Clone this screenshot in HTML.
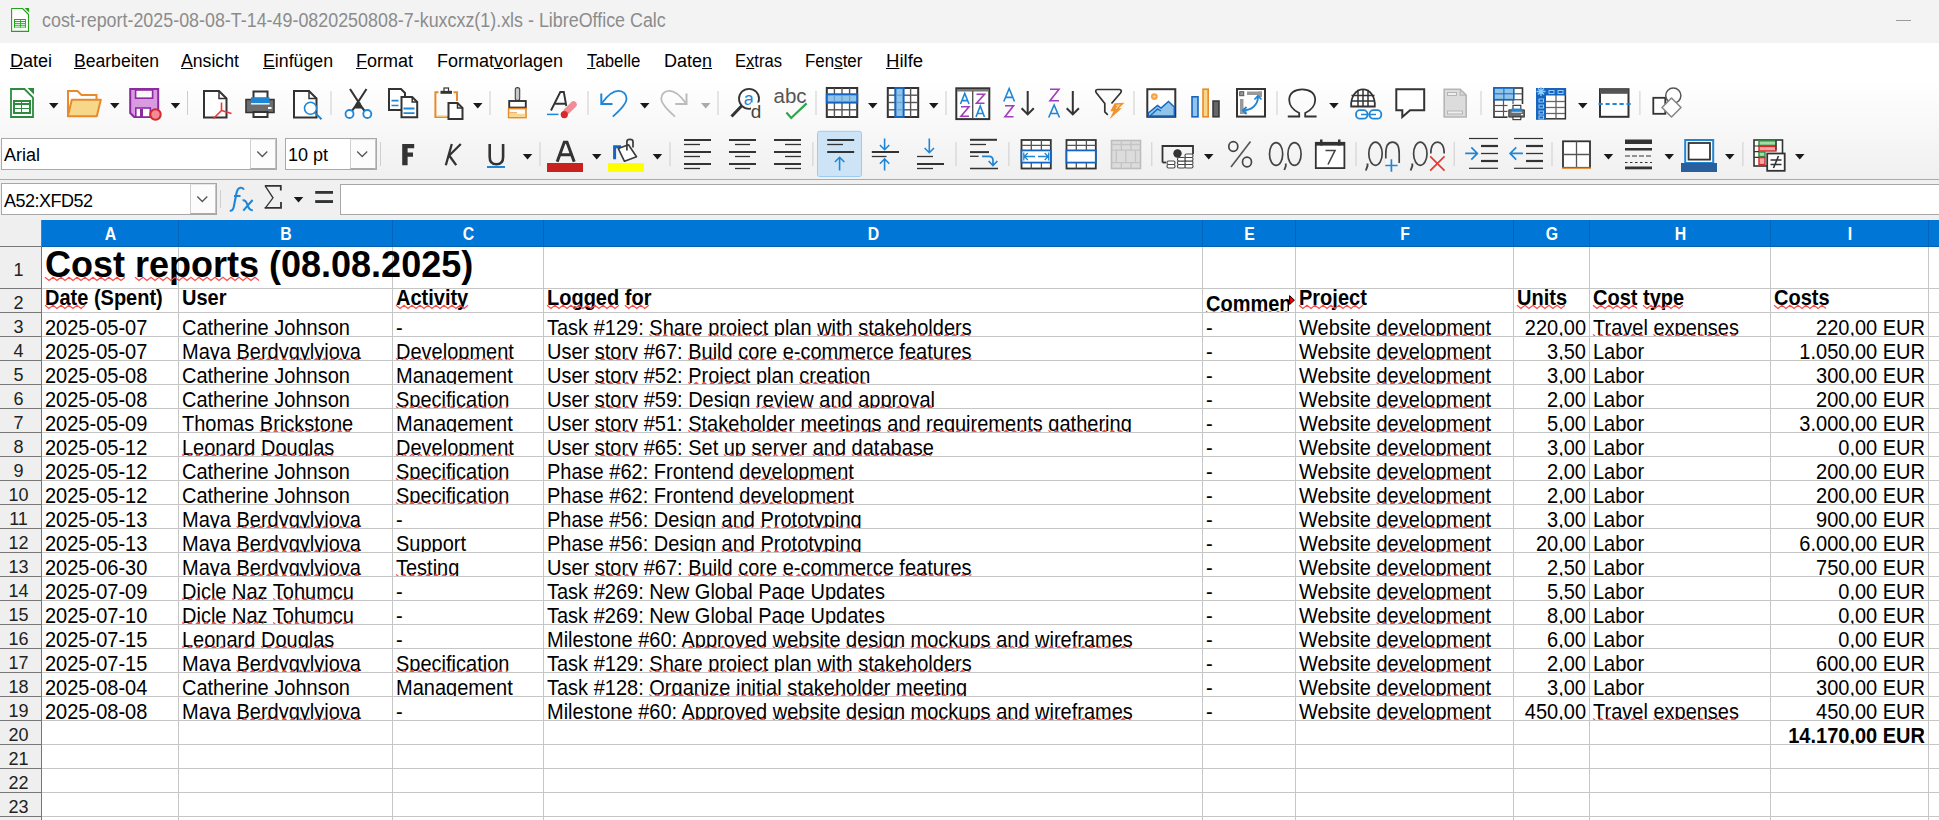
<!DOCTYPE html><html><head><meta charset="utf-8"><style>
*{margin:0;padding:0;box-sizing:border-box}
html,body{width:1939px;height:820px;overflow:hidden;background:#fff}
body{position:relative;font-family:"Liberation Sans",sans-serif}
.a{position:absolute}
.t{position:absolute;white-space:nowrap;line-height:1}
.ui{font-family:"Liberation Sans",sans-serif}
u{text-decoration-thickness:1.3px;text-underline-offset:1px}
.sep{position:absolute;width:1px;background:#cfcfcf}
.dd{position:absolute;width:0;height:0;border-left:5px solid transparent;border-right:5px solid transparent;border-top:6px solid #1a1a1a}

</style></head><body>
<div class="a" style="left:0;top:0;width:1939px;height:43px;background:#f3f3f3"></div>
<div class="t" style="left:42px;top:10px;font-size:20px;color:#8c8c8c;transform:scaleX(0.894);transform-origin:0 0">cost-report-2025-08-08-T-14-49-0820250808-7-kuxcxz(1).xls - LibreOffice Calc</div>
<div class="a" style="left:1896px;top:20px;width:15px;height:1px;background:#9a9a9a"></div>
<div class="t" style="left:10px;top:52px;font-size:18px;color:#000;transform:scaleX(1.0);transform-origin:0 0"><u>D</u>atei</div>
<div class="t" style="left:74px;top:52px;font-size:18px;color:#000;transform:scaleX(0.976);transform-origin:0 0"><u>B</u>earbeiten</div>
<div class="t" style="left:181px;top:52px;font-size:18px;color:#000;transform:scaleX(0.98);transform-origin:0 0"><u>A</u>nsicht</div>
<div class="t" style="left:263px;top:52px;font-size:18px;color:#000;transform:scaleX(0.985);transform-origin:0 0"><u>E</u>infügen</div>
<div class="t" style="left:356px;top:52px;font-size:18px;color:#000;transform:scaleX(1.0);transform-origin:0 0"><u>F</u>ormat</div>
<div class="t" style="left:437px;top:52px;font-size:18px;color:#000;transform:scaleX(1.0);transform-origin:0 0">Format<u>v</u>orlagen</div>
<div class="t" style="left:587px;top:52px;font-size:18px;color:#000;transform:scaleX(0.934);transform-origin:0 0"><u>T</u>abelle</div>
<div class="t" style="left:664px;top:52px;font-size:18px;color:#000;transform:scaleX(1.0);transform-origin:0 0">Date<u>n</u></div>
<div class="t" style="left:735px;top:52px;font-size:18px;color:#000;transform:scaleX(0.92);transform-origin:0 0">E<u>x</u>tras</div>
<div class="t" style="left:805px;top:52px;font-size:18px;color:#000;transform:scaleX(0.94);transform-origin:0 0">Fen<u>s</u>ter</div>
<div class="t" style="left:886px;top:52px;font-size:18px;color:#000;transform:scaleX(1.03);transform-origin:0 0"><u>H</u>ilfe</div>
<div class="a" style="left:0;top:80px;width:1939px;height:99px;background:linear-gradient(#ffffff,#f0f0f0)"></div>
<div class="a" style="left:0;top:179px;width:1939px;height:1px;background:#ababab"></div>
<div class="a" style="left:1px;top:138px;width:276px;height:32px;background:#fff;border:1px solid #a9a9a9"></div>
<div class="a" style="left:250px;top:139px;width:26px;height:30px;background:#fcfcfc;border-left:1px solid #cfcfcf;border-top:1px solid #e6e6e6;border-bottom:1px solid #a9a9a9;border-right:1px solid #c4c4c4"></div>
<div class="t" style="left:4px;top:146px;font-size:18px;color:#000">Arial</div>
<div class="a" style="left:285px;top:138px;width:92px;height:32px;background:#fff;border:1px solid #a9a9a9"></div>
<div class="a" style="left:350px;top:139px;width:26px;height:30px;background:#fcfcfc;border-left:1px solid #cfcfcf;border-top:1px solid #e6e6e6;border-bottom:1px solid #a9a9a9;border-right:1px solid #c4c4c4"></div>
<div class="t" style="left:288px;top:146px;font-size:18px;color:#000">10 pt</div>
<div class="sep" style="left:380px;top:142px;height:24px"></div>
<div class="a" style="left:0;top:180px;width:1939px;height:40px;background:#f0f0f0"></div>
<div class="a" style="left:1px;top:183px;width:216px;height:32px;background:#fff;border:1px solid #a7a7a7"></div>
<div class="a" style="left:190px;top:184px;width:26px;height:30px;background:#fcfcfc;border-left:1px solid #cfcfcf;border-top:1px solid #e6e6e6;border-bottom:1px solid #a9a9a9;border-right:1px solid #c4c4c4"></div>
<div class="t" style="left:4px;top:192px;font-size:18px;letter-spacing:-0.52px;color:#000">A52:XFD52</div>
<div class="sep" style="left:220px;top:190px;height:18px"></div>
<div class="a" style="left:340px;top:184px;width:1600px;height:31px;background:#fff;border:1px solid #a7a7a7"></div>
<svg class="a" style="left:0;top:0" width="1939" height="220" viewBox="0 0 1939 220"><path d="M11 89H24.5L33 97.5V117H11Z" fill="#fff" stroke="#2d8a3e" stroke-width="1.8"/>
<path d="M27.5 88H34V94.5Z" fill="#2d8a3e"/>
<rect x="13" y="100" width="18" height="14" fill="#2d8a3e"/>
<rect x="15" y="102" width="6" height="1" fill="#fff"/><rect x="22" y="102" width="7" height="1" fill="#fff"/>
<rect x="15" y="105" width="6" height="3" fill="#fff"/><rect x="22" y="105" width="7" height="3" fill="#fff"/>
<rect x="15" y="109" width="6" height="3" fill="#fff"/><rect x="22" y="109" width="7" height="3" fill="#fff"/>
<path d="M49 103h9.5l-4.75 5.5z" fill="#1a1a1a"/>
<path d="M68 116V91H77.5L81.5 95H96.5V100" fill="#fff" stroke="#e8892b" stroke-width="2"/>
<path d="M67.8 116.2L71.8 99.8H100.8L96.8 116.2Z" fill="#f7d88a" stroke="#e8892b" stroke-width="2" stroke-linejoin="round"/>
<path d="M110 103h9.5l-4.75 5.5z" fill="#1a1a1a"/>
<path d="M130.2 89H158.2V117H134.2L130.2 113Z" fill="#d89ae0" stroke="#8e2aa0" stroke-width="2"/>
<rect x="135.6" y="90" width="17" height="8.2" fill="#f8f8f8" stroke="#8e2aa0" stroke-width="1.6"/>
<rect x="135.8" y="108" width="14.5" height="9" fill="#fff" stroke="#8e2aa0" stroke-width="1.6"/>
<rect x="140" y="109" width="3" height="8" fill="#8e2aa0"/>
<circle cx="155.5" cy="114.5" r="5.2" fill="#f48a93" stroke="#d42a2a" stroke-width="2"/>
<path d="M170.7 103h9.5l-4.75 5.5z" fill="#1a1a1a"/>
<rect x="187" y="91" width="1" height="24" fill="#cdcdcd"/>
<path d="M204 91H219.0L226.5 98.5V117.5H204Z" fill="#fff" stroke="#333" stroke-width="2" stroke-linejoin="miter"/><path d="M219.0 91V98.5H226.5" fill="none" stroke="#333" stroke-width="1.5"/>
<path d="M221.5 102.5V110.5M221.5 110.5L213.5 118.5M221.5 110.5L231.5 113.5" stroke="#e53935" stroke-width="1.6" fill="none"/>
<g transform="translate(245 90.5) scale(1.0)"><rect x="8.5" y="1" width="14" height="8" fill="#fff" stroke="#333" stroke-width="2"/><path d="M1 9H29V22H1Z" fill="#6d6d6d" stroke="#333" stroke-width="1.6"/><rect x="6" y="6.7" width="18.5" height="5.8" fill="#1f86d6"/><rect x="6" y="12.5" width="18.5" height="1.6" fill="#d6ecfa"/><rect x="8.5" y="21.5" width="14" height="5" fill="#fff" stroke="#333" stroke-width="2"/><rect x="23" y="16.5" width="3.5" height="2" fill="#fff"/></g>
<path d="M294 91H309.0L316.5 98.5V117.5H294Z" fill="#fff" stroke="#333" stroke-width="2" stroke-linejoin="miter"/><path d="M309.0 91V98.5H316.5" fill="none" stroke="#333" stroke-width="1.5"/>
<circle cx="310.5" cy="108.3" r="6" fill="#fff" stroke="#1f86d6" stroke-width="1.6"/><path d="M314.8 112.6L321.5 119.3" stroke="#1f86d6" stroke-width="2"/>
<rect x="330.5" y="91" width="1" height="24" fill="#cdcdcd"/>
<path d="M350 89L362 107.5L364.5 110.8M366.5 89L354.5 107.5L352 110.8" stroke="#333" stroke-width="2.1" fill="none"/><path d="M356.2 102.5H360.3L362.3 108.5H354.2Z" fill="#333"/>
<circle cx="349.5" cy="114" r="4" fill="#fff" stroke="#1f86d6" stroke-width="1.8"/><circle cx="367.3" cy="114" r="4" fill="#fff" stroke="#1f86d6" stroke-width="1.8"/>
<path d="M389 89H401L405 93V110H389Z" fill="#fff" stroke="#333" stroke-width="2"/>
<path d="M391.5 100.6H398.5M391.5 105.5H398.5" stroke="#1f86d6" stroke-width="1.6"/>
<path d="M401.5 97H412.2L417.2 102V117.2H401.5Z" fill="#fff" stroke="#333" stroke-width="2" stroke-linejoin="miter"/><path d="M412.2 97V102H417.2" fill="none" stroke="#333" stroke-width="1.5"/>
<path d="M403.5 108.5H414.5M403.5 113.2H414.5" stroke="#1f86d6" stroke-width="1.8"/>
<path d="M438.5 92.3H435.4V117H448" stroke="#e8892b" stroke-width="2" fill="none"/><path d="M453.5 92.3H457V101" stroke="#e8892b" stroke-width="2" fill="none"/><path d="M436.5 116H447" stroke="#f7d88a" stroke-width="1.5"/>
<rect x="440.5" y="90.8" width="11.5" height="3" fill="#333"/><rect x="444" y="88" width="4.5" height="3.5" fill="#fff" stroke="#333" stroke-width="1.2"/>
<path d="M448.5 103H457.5L462.5 108V119H448.5Z" fill="#fff" stroke="#333" stroke-width="2" stroke-linejoin="miter"/><path d="M457.5 103V108H462.5" fill="none" stroke="#333" stroke-width="1.5"/>
<path d="M473 103h9.5l-4.75 5.5z" fill="#1a1a1a"/>
<rect x="489.5" y="91" width="1" height="24" fill="#cdcdcd"/>
<rect x="515.3" y="87.6" width="4.4" height="13" rx="2" fill="#c8c8c8" stroke="#444" stroke-width="1.1"/>
<rect x="509.2" y="101" width="16.6" height="6.6" fill="#fff" stroke="#333" stroke-width="1.9"/>
<rect x="508.6" y="108.6" width="17.4" height="9" fill="#fff" stroke="#e8892b" stroke-width="1.6"/><rect x="509.4" y="113.8" width="15.8" height="3" fill="#f7d88a"/><path d="M509.5 112.8H517" stroke="#e8892b" stroke-width="1.2" opacity="0.8"/>
<path d="M551 110.5L560.3 92H563.8L566.3 106M555.3 103.8H566" stroke="#333" stroke-width="1.9" fill="none"/>
<path d="M547 114.4H558.5" stroke="#1f86d6" stroke-width="1.5"/>
<path d="M566.5 111.5L573.5 104.5" stroke="#f48a93" stroke-width="6.5" stroke-linecap="round"/><circle cx="564.3" cy="114.6" r="3.6" fill="#d42a2a"/>
<rect x="587.5" y="91" width="1" height="24" fill="#cdcdcd"/>
<path d="M601.3 93.5V104H612.5" stroke="#1f86d6" stroke-width="2" fill="none"/>
<path d="M602 103C607 96 612 90.8 618.5 90.8C623.5 90.8 626.5 94.5 626.5 98.8C626.5 103.5 621 109.5 612.8 116.6" stroke="#1f86d6" stroke-width="1.8" fill="none"/>
<path d="M640 103h9.5l-4.75 5.5z" fill="#1a1a1a"/>
<path d="M686.5 93.5V104H675.3" stroke="#bbb" stroke-width="2" fill="none"/>
<path d="M685.8 103C680.8 96 675.8 90.8 669.3 90.8C664.3 90.8 661.3 94.5 661.3 98.8C661.3 103.5 666.8 109.5 675 116.6" stroke="#bbb" stroke-width="1.8" fill="none"/>
<path d="M701 103h9.5l-4.75 5.5z" fill="#aaa"/>
<rect x="717.5" y="91" width="1" height="24" fill="#cdcdcd"/>
<circle cx="749" cy="98.8" r="10" fill="none" stroke="#333" stroke-width="1.8"/><path d="M742 105.5L731.5 116.5" stroke="#333" stroke-width="3"/>
<text x="743.8" y="104.8" font-family="Liberation Sans" font-size="18" fill="#1f86d6">a</text>
<rect x="751" y="102.5" width="12" height="16" fill="#fbfbfb"/><text x="750.8" y="117.6" font-family="Liberation Sans" font-size="19" fill="#444">d</text>
<text x="773.5" y="102.8" font-family="Liberation Sans" font-size="20.5" fill="#555" textLength="33" lengthAdjust="spacingAndGlyphs">abc</text>
<path d="M786.4 112.5L791.2 118L806.6 103.4" stroke="#2aa84a" stroke-width="2.2" fill="none"/>
<rect x="815.5" y="91" width="1" height="24" fill="#cdcdcd"/>
<rect x="826.8" y="88" width="30.40000000000009" height="29" fill="#fff" stroke="#333" stroke-width="2"/><line x1="834.4" y1="88" x2="834.4" y2="117" stroke="#555" stroke-width="1.4"/><line x1="842.0" y1="88" x2="842.0" y2="117" stroke="#555" stroke-width="1.4"/><line x1="849.6" y1="88" x2="849.6" y2="117" stroke="#555" stroke-width="1.4"/><line x1="826.8" y1="95.2" x2="857.2" y2="95.2" stroke="#555" stroke-width="1.4"/><line x1="826.8" y1="102.5" x2="857.2" y2="102.5" stroke="#555" stroke-width="1.4"/><line x1="826.8" y1="109.8" x2="857.2" y2="109.8" stroke="#555" stroke-width="1.4"/>
<rect x="826.8" y="94.3" width="30.4" height="8.2" fill="#90c4e8" stroke="#1565c0" stroke-width="2"/>
<line x1="834.4" y1="95.3" x2="834.4" y2="101.5" stroke="#5fa3dc" stroke-width="1.2"/>
<line x1="842.0" y1="95.3" x2="842.0" y2="101.5" stroke="#5fa3dc" stroke-width="1.2"/>
<line x1="849.6" y1="95.3" x2="849.6" y2="101.5" stroke="#5fa3dc" stroke-width="1.2"/>
<path d="M868 103h9.5l-4.75 5.5z" fill="#1a1a1a"/>
<rect x="887.8" y="88" width="30.40000000000009" height="29" fill="#fff" stroke="#333" stroke-width="2"/><line x1="895.4" y1="88" x2="895.4" y2="117" stroke="#555" stroke-width="1.4"/><line x1="903.0" y1="88" x2="903.0" y2="117" stroke="#555" stroke-width="1.4"/><line x1="910.6" y1="88" x2="910.6" y2="117" stroke="#555" stroke-width="1.4"/><line x1="887.8" y1="95.2" x2="918.2" y2="95.2" stroke="#555" stroke-width="1.4"/><line x1="887.8" y1="102.5" x2="918.2" y2="102.5" stroke="#555" stroke-width="1.4"/><line x1="887.8" y1="109.8" x2="918.2" y2="109.8" stroke="#555" stroke-width="1.4"/>
<rect x="895.4" y="88" width="8.2" height="29" fill="#90c4e8" stroke="#1565c0" stroke-width="2"/>
<line x1="896.4" y1="95.2" x2="902.6" y2="95.2" stroke="#5fa3dc" stroke-width="1.2"/>
<line x1="896.4" y1="102.5" x2="902.6" y2="102.5" stroke="#5fa3dc" stroke-width="1.2"/>
<line x1="896.4" y1="109.8" x2="902.6" y2="109.8" stroke="#5fa3dc" stroke-width="1.2"/>
<path d="M929 103h9.5l-4.75 5.5z" fill="#1a1a1a"/>
<rect x="945.5" y="91" width="1" height="24" fill="#cdcdcd"/>
<rect x="956.3" y="88.3" width="33" height="30.8" fill="#fff" stroke="#333" stroke-width="2"/><rect x="957" y="89" width="31.5" height="2.5" fill="#777"/><rect x="972" y="91" width="1.4" height="27.5" fill="#555"/>
<path d="M960.5 104L964.75 93.5L969 104M962.37 100.64H967.13" stroke="#1f86d6" stroke-width="1.6" fill="none"/><path d="M961 106.8H969L961 116.2H969" stroke="#a33bbd" stroke-width="1.6" fill="none"/>
<path d="M976.5 94.3H984.5L976.5 103.2H984.5" stroke="#a33bbd" stroke-width="1.6" fill="none"/><path d="M976 117L980.25 106L984.5 117M977.87 113.48H982.63" stroke="#1f86d6" stroke-width="1.6" fill="none"/>
<path d="M1003.8 101.5L1009.15 88.5L1014.5 101.5M1006.154 97.34H1012.146" stroke="#1f86d6" stroke-width="1.6" fill="none"/><path d="M1005 105.8H1013.5L1005 116.7H1013.5" stroke="#a33bbd" stroke-width="1.6" fill="none"/>
<path d="M1027.7 91V114.3M1021.6 108.3L1027.7 114.4L1033.8 108.3" stroke="#333" stroke-width="2" fill="none"/>
<path d="M1050 89.3H1059L1050 100.7H1059" stroke="#a33bbd" stroke-width="1.6" fill="none"/><path d="M1048.7 117.5L1054.1 105L1059.5 117.5M1051.076 113.5H1057.124" stroke="#1f86d6" stroke-width="1.6" fill="none"/>
<path d="M1072.8 91V114.3M1066.7 108.3L1072.8 114.4L1078.9 108.3" stroke="#333" stroke-width="2" fill="none"/>
<path d="M1097.5 89.5H1119.5Q1122.5 90 1120.5 93L1111.5 103.5M1097.5 89.5Q1094.5 90 1096.5 93L1104.8 103.5V111.8L1107.8 114.8" stroke="#333" stroke-width="1.7" fill="none"/>
<path d="M1114.5 103.2L1124.5 102.8L1118.8 108.2L1121.8 108.3L1109.5 119.3L1113.5 111.3L1110.3 111.3Z" fill="#f0922e"/><path d="M1116 105.5L1119 105L1116 109" stroke="#fbd49a" stroke-width="1.2" fill="none"/>
<rect x="1133.5" y="91" width="1" height="24" fill="#cdcdcd"/>
<rect x="1147.3" y="89.2" width="28" height="27.6" fill="#fff" stroke="#333" stroke-width="2"/>
<circle cx="1154.3" cy="96.6" r="3.4" fill="#f5a34a"/><path d="M1152.8 96.6H1155.8M1154.3 95.1V98.1" stroke="#ffd9a8" stroke-width="0.8"/>
<path d="M1148.3 116V113L1157.5 105.5L1161 108L1168.5 101.5L1174.3 107V116Z" fill="#90c4e8" stroke="#1565c0" stroke-width="1.5"/><path d="M1150 116L1157.5 109L1161 111" stroke="#1565c0" stroke-width="1.2" fill="none"/>
<rect x="1192" y="96.8" width="6" height="20" fill="#90c4e8" stroke="#1565c0" stroke-width="1.6"/>
<rect x="1203" y="89.2" width="5.2" height="27.6" fill="#f7d88a" stroke="#e8892b" stroke-width="1.6"/>
<rect x="1213" y="101" width="6" height="15.8" fill="#666" stroke="#333" stroke-width="1.5"/>
<rect x="1237" y="89" width="28" height="27.6" fill="#fff" stroke="#333" stroke-width="2"/>
<rect x="1239.7" y="91.7" width="4" height="4" fill="#999" stroke="#555" stroke-width="1"/><rect x="1247" y="91.5" width="15" height="3.5" fill="#999"/><rect x="1258.5" y="91.5" width="3.5" height="5.5" fill="#999"/><rect x="1240" y="99" width="3.5" height="15" fill="#999"/><rect x="1240" y="110.5" width="6.5" height="3.5" fill="#999"/>
<path d="M1243.5 110.3C1251 110.3 1258 105.5 1258 96.5" stroke="#1f86d6" stroke-width="1.8" fill="none"/><path d="M1254.5 99.5L1258 95.8L1261.5 99.5M1246.5 107L1242.8 110.3L1246.5 114" stroke="#1f86d6" stroke-width="1.8" fill="none"/>
<rect x="1276.5" y="91" width="1" height="24" fill="#cdcdcd"/>
<path d="M1287.8 116.5H1299.2V113C1292.5 110 1289.2 104.5 1289.2 99.8C1289.2 93 1294.8 89.3 1302.2 89.3C1309.6 89.3 1315.2 93 1315.2 99.8C1315.2 104.5 1311.9 110 1305.2 113V116.5H1316.6" stroke="#333" stroke-width="1.8" fill="none"/>
<path d="M1329.2 103h9.5l-4.75 5.5z" fill="#1a1a1a"/>
<path d="M1351.2 106.5C1350.5 96 1356.5 89.3 1363 89.3C1369.5 89.3 1375.5 96 1374.8 106.5Z" fill="#fff" stroke="#333" stroke-width="1.8"/>
<path d="M1351.5 95.5H1374.5M1351 101H1375M1358 89.8V106.5M1368 89.8V106.5M1363 89.5V106.5" stroke="#333" stroke-width="1.5" fill="none"/>
<rect x="1356" y="110.2" width="11.5" height="8.5" rx="4" fill="#fff" stroke="#1f86d6" stroke-width="1.8"/><rect x="1369.5" y="110.2" width="11.8" height="8.5" rx="4" fill="#fff" stroke="#1f86d6" stroke-width="1.8"/><path d="M1361 114.5H1376" stroke="#1f86d6" stroke-width="1.5"/>
<path d="M1396.3 89.2H1424.2V110.2H1410L1402.3 117V110.2H1396.3Z" fill="#fff" stroke="#333" stroke-width="2"/>
<path d="M1444.2 89.2H1460.2L1466.2 95.2V117H1444.2Z" fill="#dcdcdc" stroke="#b5b5b5" stroke-width="1.6" stroke-linejoin="miter"/><path d="M1460.2 89.2V95.2H1466.2" fill="none" stroke="#b5b5b5" stroke-width="1.2000000000000002"/>
<rect x="1447.5" y="92.5" width="9" height="3" fill="#eee" stroke="#b5b5b5" stroke-width="1"/><rect x="1447.5" y="111" width="15" height="3" fill="#eee" stroke="#b5b5b5" stroke-width="1"/>
<rect x="1480.5" y="91" width="1" height="24" fill="#cdcdcd"/>
<rect x="1494" y="88" width="28.5" height="29.200000000000003" fill="#fff" stroke="#333" stroke-width="1.6"/><line x1="1503.5" y1="88" x2="1503.5" y2="117.2" stroke="#555" stroke-width="1.2"/><line x1="1513.0" y1="88" x2="1513.0" y2="117.2" stroke="#555" stroke-width="1.2"/><line x1="1494" y1="93.8" x2="1522.5" y2="93.8" stroke="#555" stroke-width="1.2"/><line x1="1494" y1="99.7" x2="1522.5" y2="99.7" stroke="#555" stroke-width="1.2"/><line x1="1494" y1="105.5" x2="1522.5" y2="105.5" stroke="#555" stroke-width="1.2"/><line x1="1494" y1="111.4" x2="1522.5" y2="111.4" stroke="#555" stroke-width="1.2"/>
<rect x="1494" y="88" width="19.8" height="11.7" fill="#90c4e8" stroke="#1565c0" stroke-width="1.6"/><line x1="1503.9" y1="88.5" x2="1503.9" y2="99" stroke="#1565c0" stroke-width="1"/><line x1="1494.5" y1="93.8" x2="1513.3" y2="93.8" stroke="#1565c0" stroke-width="1"/>
<rect x="1507.5" y="104" width="18" height="17" fill="#fbfbfb"/>
<g transform="translate(1508.2 104.8) scale(0.56)"><rect x="8.5" y="1" width="14" height="8" fill="#fff" stroke="#333" stroke-width="2"/><path d="M1 9H29V22H1Z" fill="#6d6d6d" stroke="#333" stroke-width="1.6"/><rect x="6" y="6.7" width="18.5" height="5.8" fill="#1f86d6"/><rect x="6" y="12.5" width="18.5" height="1.6" fill="#d6ecfa"/><rect x="8.5" y="21.5" width="14" height="5" fill="#fff" stroke="#333" stroke-width="2"/><rect x="23" y="16.5" width="3.5" height="2" fill="#fff"/></g>
<rect x="1536.8" y="88.8" width="28.6" height="30" fill="#fff" stroke="#333" stroke-width="1.5"/>
<line x1="1546" y1="101.5" x2="1565" y2="101.5" stroke="#666" stroke-width="1.3"/>
<line x1="1546" y1="107.5" x2="1565" y2="107.5" stroke="#666" stroke-width="1.3"/>
<line x1="1546" y1="113.5" x2="1565" y2="113.5" stroke="#666" stroke-width="1.3"/>
<line x1="1556" y1="95" x2="1556" y2="118.5" stroke="#666" stroke-width="1.3"/>
<rect x="1536" y="88" width="30" height="7.5" fill="#1565c0"/><rect x="1536" y="88" width="10" height="31.5" fill="#1565c0"/>
<path d="M1541 87V96M1536.5 91.5H1545.5M1538 88.5L1544 94.5M1544 88.5L1538 94.5" stroke="#8fd0ff" stroke-width="1.3"/>
<rect x="1539" y="99" width="4.5" height="3" fill="none" stroke="#a8d4f5" stroke-width="0.9"/>
<rect x="1539" y="105" width="4.5" height="3" fill="none" stroke="#a8d4f5" stroke-width="0.9"/>
<rect x="1539" y="111" width="4.5" height="3" fill="none" stroke="#a8d4f5" stroke-width="0.9"/>
<rect x="1539" y="116" width="4.5" height="3" fill="none" stroke="#a8d4f5" stroke-width="0.9"/>
<rect x="1549" y="90.5" width="5" height="3" fill="none" stroke="#a8d4f5" stroke-width="0.9"/>
<rect x="1558" y="90.5" width="5" height="3" fill="none" stroke="#a8d4f5" stroke-width="0.9"/>
<path d="M1578 103h9.5l-4.75 5.5z" fill="#1a1a1a"/>
<rect x="1600" y="89.2" width="28.5" height="27.6" fill="#fff" stroke="#333" stroke-width="2"/><rect x="1600" y="89.2" width="28.5" height="4.6" fill="#555"/>
<path d="M1598.5 104H1631" stroke="#1f86d6" stroke-width="2" stroke-dasharray="4.2 2.8"/>
<rect x="1639.4" y="91" width="1" height="24" fill="#cdcdcd"/>
<rect x="1653.3" y="97.8" width="12" height="16" fill="#fff" stroke="#333" stroke-width="1.8"/>
<circle cx="1673.3" cy="95.6" r="7.6" fill="#fff" stroke="#555" stroke-width="1.5"/>
<path d="M1671.5 98L1681 107.5L1671.5 117L1662 107.5Z" fill="#fff" stroke="#888" stroke-width="1.6" stroke-linejoin="round"/>
<path d="M402.2 144H414.2V148.2H407.6V152.6H413V156.8H407.6V165.2H402.2Z" fill="#333"/>
<path d="M451.8 144L445.8 165.2M460.8 144L449.2 155.5L456.2 165.2" stroke="#333" stroke-width="2.3" fill="none"/>
<path d="M489.7 144V157C489.7 162 492.3 164.3 496.4 164.3C500.5 164.3 503.1 162 503.1 157V144" stroke="#333" stroke-width="2.6" fill="none"/><rect x="487" y="166" width="18" height="2" fill="#1f86d6"/>
<path d="M522.8 154h9.5l-4.75 5.5z" fill="#1a1a1a"/>
<rect x="539.5" y="142" width="1" height="24" fill="#cdcdcd"/>
<path d="M557.2 161.7L564.3 142.2H567L574.2 161.7M559.8 154.8H571.6" stroke="#333" stroke-width="3" fill="none"/><rect x="547" y="163" width="36" height="9" fill="#c9211e"/>
<path d="M592 154h9.5l-4.75 5.5z" fill="#1a1a1a"/>
<path d="M614.6 159.3V146.8H621" stroke="#1565c0" stroke-width="3" fill="none"/>
<path d="M618.3 148.6L628.5 144.8L636.5 156.8L624.5 161.3Z" fill="#fff" stroke="#3a3a3a" stroke-width="1.6" stroke-linejoin="round"/><path d="M626.9 150.5V141.7Q626.9 139.4 629.9 139.4Q633 139.4 633 141.7V147.5" stroke="#3a3a3a" stroke-width="1.7" fill="none"/>
<rect x="608" y="163" width="36" height="9" fill="#ffff00"/>
<path d="M652.7 154h9.5l-4.75 5.5z" fill="#1a1a1a"/>
<rect x="669.5" y="142" width="1" height="24" fill="#cdcdcd"/>
<rect x="684" y="139.0" width="27" height="2" fill="#333"/><rect x="684" y="143.85" width="16" height="1.3" fill="#333"/><rect x="684" y="151.0" width="27" height="2" fill="#333"/><rect x="684" y="155.85" width="16" height="1.3" fill="#333"/><rect x="684" y="163.0" width="27" height="2" fill="#333"/><rect x="684" y="167.85" width="16" height="1.3" fill="#333"/>
<rect x="729" y="139.0" width="27" height="2" fill="#333"/><rect x="735" y="143.85" width="15" height="1.3" fill="#333"/><rect x="729" y="151.0" width="27" height="2" fill="#333"/><rect x="735" y="155.85" width="15" height="1.3" fill="#333"/><rect x="729" y="163.0" width="27" height="2" fill="#333"/><rect x="735" y="167.85" width="15" height="1.3" fill="#333"/>
<rect x="774" y="139.0" width="27" height="2" fill="#333"/><rect x="785" y="143.85" width="16" height="1.3" fill="#333"/><rect x="774" y="151.0" width="27" height="2" fill="#333"/><rect x="785" y="155.85" width="16" height="1.3" fill="#333"/><rect x="774" y="163.0" width="27" height="2" fill="#333"/><rect x="785" y="167.85" width="16" height="1.3" fill="#333"/>
<rect x="812.4" y="142" width="1" height="24" fill="#cdcdcd"/>
<rect x="817.5" y="131.3" width="44" height="45.2" rx="2" fill="#cde4f7" stroke="#9dcbf0" stroke-width="1"/>
<rect x="827.2" y="139.0" width="27.0" height="2" fill="#333"/><rect x="827.2" y="143.85" width="15.799999999999955" height="1.3" fill="#333"/><rect x="827.2" y="151.0" width="27.0" height="2" fill="#333"/>
<path d="M839.6 170.5V157.5M834.9 162L839.6 157.3L844.3 162" stroke="#1f86d6" stroke-width="1.6" fill="none"/>
<rect x="871.8" y="151.0" width="27.200000000000045" height="2" fill="#333"/><rect x="871.8" y="155.85" width="14.700000000000045" height="1.3" fill="#333"/>
<path d="M884.6 138.5V149.5M879.9 145L884.6 149.7L889.3 145M884.6 170.5V159.2M879.9 163.7L884.6 159L889.3 163.7" stroke="#1f86d6" stroke-width="1.6" fill="none"/>
<rect x="917" y="155.85" width="16" height="1.3" fill="#333"/><rect x="917" y="163.0" width="27" height="2" fill="#333"/><rect x="917" y="167.85" width="16" height="1.3" fill="#333"/>
<path d="M929.3 138.5V152.5M924.6 148L929.3 152.7L934 148" stroke="#1f86d6" stroke-width="1.6" fill="none"/>
<rect x="955.5" y="142" width="1" height="24" fill="#cdcdcd"/>
<rect x="970" y="138.8" width="27" height="2" fill="#333"/><rect x="970" y="143.85" width="16" height="1.3" fill="#333"/><rect x="970" y="151.1" width="19" height="2" fill="#333"/><rect x="970" y="155.65" width="8.600000000000023" height="1.3" fill="#333"/><rect x="970" y="167.75" width="28" height="1.5" fill="#333"/>
<path d="M982 156.3H989Q993 156.3 993 160.5V165M988.6 161L993 165.5L997.4 161" stroke="#1f86d6" stroke-width="1.7" fill="none"/>
<rect x="1008.4" y="142" width="1" height="24" fill="#cdcdcd"/>
<rect x="1021.5" y="140" width="29.3" height="28.5" fill="#fff" stroke="#333" stroke-width="1.8"/>
<path d="M1021.5 145.3H1050.8M1031.3 140V150.3M1041.4 140V150.3M1031.3 162.5V168.5M1041.4 162.5V168.5" stroke="#555" stroke-width="1.3"/>
<rect x="1021.5" y="150.4" width="29.3" height="12.2" fill="#fff" stroke="#1565c0" stroke-width="1.8"/>
<rect x="1066.5" y="140" width="29.3" height="28.5" fill="#fff" stroke="#333" stroke-width="1.8"/>
<path d="M1066.5 145.3H1095.8M1076.3 140V150.3M1086.4 140V150.3M1076.3 162.5V168.5M1086.4 162.5V168.5" stroke="#555" stroke-width="1.3"/>
<rect x="1066.5" y="150.4" width="29.3" height="12.2" fill="#fff" stroke="#1565c0" stroke-width="1.8"/>
<path d="M1024.5 156.5H1035M1038 156.5H1048M1027.8 153L1024.3 156.5L1027.8 160M1044.7 153L1048.2 156.5L1044.7 160M1023.8 152.5V160.5M1048.7 152.5V160.5" stroke="#1f86d6" stroke-width="1.3" fill="none"/>
<rect x="1111.5" y="140.5" width="29" height="28" fill="#dcdcdc" stroke="#bdbdbd" stroke-width="1.6"/>
<path d="M1111.5 144.5H1140.5M1111.5 150.2H1140.5M1111.5 162.6H1140.5M1121.3 140.5V150.2M1131 140.5V150.2M1121.3 162.6V168.5M1131 162.6V168.5M1116.3 150.2V162.6M1125.8 150.2V162.6M1135.5 150.2V162.6" stroke="#c4c4c4" stroke-width="1.3"/>
<rect x="1151.3" y="142" width="1" height="24" fill="#cdcdcd"/>
<path d="M1162.5 162.5V146H1193V154" stroke="#333" stroke-width="1.8" fill="none"/><path d="M1162.5 162.5H1166" stroke="#333" stroke-width="1.8"/>
<circle cx="1177.5" cy="153.5" r="4.2" fill="#333"/>
<rect x="1167" y="164.5" width="8" height="3.5" rx="1.5" fill="#fff" stroke="#444" stroke-width="1.1"/>
<rect x="1167" y="161.0" width="8" height="3.5" rx="1.5" fill="#fff" stroke="#444" stroke-width="1.1"/>
<rect x="1177.5" y="164.5" width="8" height="3.5" rx="1.5" fill="#fff" stroke="#444" stroke-width="1.1"/>
<rect x="1177.5" y="161.0" width="8" height="3.5" rx="1.5" fill="#fff" stroke="#444" stroke-width="1.1"/>
<rect x="1177.5" y="157.5" width="8" height="3.5" rx="1.5" fill="#fff" stroke="#444" stroke-width="1.1"/>
<rect x="1185" y="164.5" width="8" height="3.5" rx="1.5" fill="#fff" stroke="#444" stroke-width="1.1"/>
<rect x="1185" y="161.0" width="8" height="3.5" rx="1.5" fill="#fff" stroke="#444" stroke-width="1.1"/>
<rect x="1185" y="157.5" width="8" height="3.5" rx="1.5" fill="#fff" stroke="#444" stroke-width="1.1"/>
<rect x="1185" y="154.0" width="8" height="3.5" rx="1.5" fill="#fff" stroke="#444" stroke-width="1.1"/>
<path d="M1204 154h9.5l-4.75 5.5z" fill="#1a1a1a"/>
<ellipse cx="1233.3" cy="146.5" rx="4.5" ry="4.9" fill="none" stroke="#444" stroke-width="1.7"/><ellipse cx="1247" cy="162" rx="4.5" ry="4.9" fill="none" stroke="#444" stroke-width="1.7"/><path d="M1250.5 141.5L1231 167" stroke="#555" stroke-width="1.6"/>
<ellipse cx="1276.1" cy="154" rx="6.6" ry="11.4" fill="none" stroke="#444" stroke-width="1.7"/><ellipse cx="1294.5" cy="154" rx="6.6" ry="11.4" fill="none" stroke="#444" stroke-width="1.7"/><path d="M1285.8 163.5V166L1284.3 170" stroke="#444" stroke-width="1.8" fill="none"/>
<rect x="1315.8" y="142.8" width="28.6" height="25.3" fill="#fff" stroke="#333" stroke-width="1.8"/><rect x="1315.8" y="142.3" width="28.6" height="3.3" fill="#333"/><rect x="1320" y="139.5" width="2.5" height="6" fill="#333"/><rect x="1338" y="139.5" width="2.5" height="6" fill="#333"/>
<path d="M1325.5 150.5H1335L1328 164.5" stroke="#444" stroke-width="1.6" fill="none"/>
<rect x="1355.5" y="142" width="1" height="24" fill="#cdcdcd"/>
<path d="M1367.5 163.5V166L1365.8 170.5" stroke="#444" stroke-width="1.9" fill="none"/><ellipse cx="1375.5" cy="153.7" rx="6.7" ry="11.6" fill="none" stroke="#444" stroke-width="1.7"/><path d="M1385.8 163V153.7C1385.8 145.5 1389 142.1 1392.5 142.1C1396 142.1 1399.2 145.5 1399.2 153.7V163" stroke="#444" stroke-width="1.7" fill="none"/>
<rect x="1385" y="158.5" width="12.5" height="8.5" fill="#f6f6f6"/><path d="M1391.4 159.3V171.7M1385.3 165.5H1397.6" stroke="#1f86d6" stroke-width="1.7"/>
<path d="M1412.3 163.5V166L1410.6 170.5" stroke="#444" stroke-width="1.9" fill="none"/><ellipse cx="1420.3" cy="153.7" rx="6.7" ry="11.6" fill="none" stroke="#444" stroke-width="1.7"/><path d="M1430.8 153.6C1430.8 145.5 1434 142.1 1437.5 142.1C1441 142.1 1444.2 145.5 1444.2 153.6" stroke="#444" stroke-width="1.7" fill="none"/>
<path d="M1430.2 156.3L1444.5 170.6M1444.5 156.3L1430.2 170.6" stroke="#e53935" stroke-width="1.7"/>
<rect x="1453.7" y="142" width="1" height="24" fill="#cdcdcd"/>
<rect x="1469" y="137.9" width="29" height="1.2" fill="#333"/><rect x="1481" y="144.9" width="17" height="2.2" fill="#333"/><rect x="1481" y="152.85" width="17" height="1.3" fill="#333"/><rect x="1481" y="159.9" width="17" height="2.2" fill="#333"/><rect x="1469" y="167.70000000000002" width="29" height="1.2" fill="#333"/>
<path d="M1465.2 153.4H1477M1471.3 147.3L1477.4 153.4L1471.3 159.6" stroke="#1f86d6" stroke-width="1.7" fill="none"/>
<rect x="1514" y="137.9" width="29" height="1.2" fill="#333"/><rect x="1526" y="144.9" width="17" height="2.2" fill="#333"/><rect x="1526" y="152.85" width="17" height="1.3" fill="#333"/><rect x="1526" y="159.9" width="17" height="2.2" fill="#333"/><rect x="1514" y="167.70000000000002" width="29" height="1.2" fill="#333"/>
<path d="M1522.9 153.4H1510.8M1516.2 147.3L1510.1 153.4L1516.2 159.6" stroke="#1f86d6" stroke-width="1.7" fill="none"/>
<rect x="1551.5" y="142" width="1" height="24" fill="#cdcdcd"/>
<rect x="1563" y="141.3" width="27" height="26.5" fill="#fff" stroke="#333" stroke-width="1.8"/><path d="M1576.5 141.3V167.8M1563 154.5H1590" stroke="#555" stroke-width="1.3"/><rect x="1562" y="167.5" width="29" height="1.4" fill="#f29a38"/>
<path d="M1603.7 154h9.5l-4.75 5.5z" fill="#1a1a1a"/>
<rect x="1625" y="139.5" width="27" height="4.5" fill="#333"/><rect x="1625" y="148" width="27" height="2.5" fill="#333"/>
<path d="M1625 156H1652" stroke="#333" stroke-width="1.2" stroke-dasharray="5 2"/><path d="M1625 162.5H1652" stroke="#333" stroke-width="1.2" stroke-dasharray="2.5 2.5"/><rect x="1625" y="166.5" width="27" height="2.8" fill="#333"/>
<path d="M1664.5 154h9.5l-4.75 5.5z" fill="#1a1a1a"/>
<rect x="1685.2" y="140" width="28" height="23" fill="#fff" stroke="#1f86d6" stroke-width="2"/><rect x="1688.6" y="143" width="21.4" height="16.6" fill="#fff" stroke="#333" stroke-width="1.8"/><rect x="1681" y="163" width="36" height="9" fill="#2a5f9e"/>
<path d="M1725 154h9.5l-4.75 5.5z" fill="#1a1a1a"/>
<rect x="1742.4" y="142" width="1" height="24" fill="#cdcdcd"/>
<rect x="1754" y="140" width="28.5" height="26" fill="#fff" stroke="#333" stroke-width="1.6"/>
<rect x="1759" y="140.8" width="17" height="4.6" fill="#a6dba8" stroke="#2d8a3e" stroke-width="1.4"/><rect x="1759" y="146.4" width="17" height="4.6" fill="#f6a5a5" stroke="#d42a2a" stroke-width="1.4"/><rect x="1759" y="152" width="6" height="4.6" fill="#a6dba8" stroke="#2d8a3e" stroke-width="1.4"/><rect x="1759" y="157.6" width="6" height="7" fill="#f6a5a5" stroke="#d42a2a" stroke-width="1.4"/>
<path d="M1754 146H1759M1754 151.7H1759M1754 157.3H1759M1776 140V150" stroke="#333" stroke-width="1.2"/>
<rect x="1767.2" y="153.5" width="17.5" height="17.3" fill="#fff" stroke="#333" stroke-width="1.8"/><path d="M1770.5 160H1781.5M1770.5 164.5H1781.5M1778.5 156L1773.5 168" stroke="#333" stroke-width="1.6"/>
<path d="M1795 154h9.5l-4.75 5.5z" fill="#1a1a1a"/>
<path d="M243.8 189.8Q243 187.3 240.3 187.8Q237.3 188.3 236.3 194L233.8 206.8Q232.8 211.3 229.8 210.6M234 196H240.5" stroke="#1f86d6" stroke-width="2.1" fill="none"/>
<path d="M242.6 200.5Q245.5 199.3 247.5 205Q249.2 210.5 252.8 210.2M252.6 200L243.3 210.6" stroke="#1f86d6" stroke-width="2.1" fill="none"/>
<path d="M264.8 185.8H280.8V190.4" stroke="#333" stroke-width="1.8" fill="none"/><path d="M265.3 186.2L273 197.8L265.3 208.2" stroke="#333" stroke-width="1.3" fill="none"/><path d="M264.6 207.8H281V202" stroke="#333" stroke-width="1.8" fill="none"/>
<path d="M293.8 197h9.5l-4.75 5.5z" fill="#1a1a1a"/>
<rect x="315.2" y="191" width="17.8" height="2.8" fill="#333"/><rect x="315.2" y="200.1" width="17.8" height="2.9" fill="#333"/><path d="M257.3 151.5L262.3 156.5L267.3 151.5" stroke="#555" stroke-width="1.3" fill="none"/><path d="M357.2 151.5L362.2 156.5L367.2 151.5" stroke="#555" stroke-width="1.3" fill="none"/><path d="M197.3 196.5L202.3 201.5L207.3 196.5" stroke="#555" stroke-width="1.3" fill="none"/></svg>
<div class="a" style="left:0;top:220px;width:41px;height:27px;background:#efefef"></div>
<div class="a" style="left:0;top:246px;width:41px;height:574px;background:#efefef"></div>
<div class="a" style="left:42px;top:220px;width:1897px;height:26px;background:#0076d6"></div>
<div class="a" style="left:41px;top:246px;width:1898px;height:1px;background:#0062b4"></div>
<div class="a" style="left:0;top:246px;width:41px;height:1px;background:#777"></div>
<div class="a" style="left:41px;top:220px;width:1px;height:600px;background:#777"></div>
<div class="a" style="left:178px;top:220px;width:1px;height:26px;background:#0064b8"></div>
<div class="t" style="left:42.2px;width:137px;text-align:center;top:225px;font-size:18px;font-weight:bold;color:#fff;transform:scaleX(0.88)">A</div>
<div class="a" style="left:392px;top:220px;width:1px;height:26px;background:#0064b8"></div>
<div class="t" style="left:179.2px;width:214px;text-align:center;top:225px;font-size:18px;font-weight:bold;color:#fff;transform:scaleX(0.88)">B</div>
<div class="a" style="left:543px;top:220px;width:1px;height:26px;background:#0064b8"></div>
<div class="t" style="left:393.2px;width:151px;text-align:center;top:225px;font-size:18px;font-weight:bold;color:#fff;transform:scaleX(0.88)">C</div>
<div class="a" style="left:1202px;top:220px;width:1px;height:26px;background:#0064b8"></div>
<div class="t" style="left:544.2px;width:659px;text-align:center;top:225px;font-size:18px;font-weight:bold;color:#fff;transform:scaleX(0.88)">D</div>
<div class="a" style="left:1295px;top:220px;width:1px;height:26px;background:#0064b8"></div>
<div class="t" style="left:1203.2px;width:93px;text-align:center;top:225px;font-size:18px;font-weight:bold;color:#fff;transform:scaleX(0.88)">E</div>
<div class="a" style="left:1513px;top:220px;width:1px;height:26px;background:#0064b8"></div>
<div class="t" style="left:1296.2px;width:218px;text-align:center;top:225px;font-size:18px;font-weight:bold;color:#fff;transform:scaleX(0.88)">F</div>
<div class="a" style="left:1589px;top:220px;width:1px;height:26px;background:#0064b8"></div>
<div class="t" style="left:1514.2px;width:76px;text-align:center;top:225px;font-size:18px;font-weight:bold;color:#fff;transform:scaleX(0.88)">G</div>
<div class="a" style="left:1770px;top:220px;width:1px;height:26px;background:#0064b8"></div>
<div class="t" style="left:1590.2px;width:181px;text-align:center;top:225px;font-size:18px;font-weight:bold;color:#fff;transform:scaleX(0.88)">H</div>
<div class="a" style="left:1928px;top:220px;width:1px;height:26px;background:#0064b8"></div>
<div class="t" style="left:1771.2px;width:158px;text-align:center;top:225px;font-size:18px;font-weight:bold;color:#fff;transform:scaleX(0.88)">I</div>
<div class="a" style="left:178px;top:247px;width:1px;height:573px;background:#c6c6c6"></div>
<div class="a" style="left:392px;top:247px;width:1px;height:573px;background:#c6c6c6"></div>
<div class="a" style="left:543px;top:247px;width:1px;height:573px;background:#c6c6c6"></div>
<div class="a" style="left:1202px;top:247px;width:1px;height:573px;background:#c6c6c6"></div>
<div class="a" style="left:1295px;top:247px;width:1px;height:573px;background:#c6c6c6"></div>
<div class="a" style="left:1513px;top:247px;width:1px;height:573px;background:#c6c6c6"></div>
<div class="a" style="left:1589px;top:247px;width:1px;height:573px;background:#c6c6c6"></div>
<div class="a" style="left:1770px;top:247px;width:1px;height:573px;background:#c6c6c6"></div>
<div class="a" style="left:1928px;top:247px;width:1px;height:573px;background:#c6c6c6"></div>
<div class="a" style="left:42px;top:288px;width:1897px;height:1px;background:#c6c6c6"></div>
<div class="a" style="left:0;top:288px;width:41px;height:1px;background:#777"></div>
<div class="a" style="left:42px;top:312px;width:1897px;height:1px;background:#c6c6c6"></div>
<div class="a" style="left:0;top:312px;width:41px;height:1px;background:#777"></div>
<div class="a" style="left:42px;top:336px;width:1897px;height:1px;background:#c6c6c6"></div>
<div class="a" style="left:0;top:336px;width:41px;height:1px;background:#777"></div>
<div class="a" style="left:42px;top:360px;width:1897px;height:1px;background:#c6c6c6"></div>
<div class="a" style="left:0;top:360px;width:41px;height:1px;background:#777"></div>
<div class="a" style="left:42px;top:384px;width:1897px;height:1px;background:#c6c6c6"></div>
<div class="a" style="left:0;top:384px;width:41px;height:1px;background:#777"></div>
<div class="a" style="left:42px;top:408px;width:1897px;height:1px;background:#c6c6c6"></div>
<div class="a" style="left:0;top:408px;width:41px;height:1px;background:#777"></div>
<div class="a" style="left:42px;top:432px;width:1897px;height:1px;background:#c6c6c6"></div>
<div class="a" style="left:0;top:432px;width:41px;height:1px;background:#777"></div>
<div class="a" style="left:42px;top:456px;width:1897px;height:1px;background:#c6c6c6"></div>
<div class="a" style="left:0;top:456px;width:41px;height:1px;background:#777"></div>
<div class="a" style="left:42px;top:480px;width:1897px;height:1px;background:#c6c6c6"></div>
<div class="a" style="left:0;top:480px;width:41px;height:1px;background:#777"></div>
<div class="a" style="left:42px;top:504px;width:1897px;height:1px;background:#c6c6c6"></div>
<div class="a" style="left:0;top:504px;width:41px;height:1px;background:#777"></div>
<div class="a" style="left:42px;top:528px;width:1897px;height:1px;background:#c6c6c6"></div>
<div class="a" style="left:0;top:528px;width:41px;height:1px;background:#777"></div>
<div class="a" style="left:42px;top:552px;width:1897px;height:1px;background:#c6c6c6"></div>
<div class="a" style="left:0;top:552px;width:41px;height:1px;background:#777"></div>
<div class="a" style="left:42px;top:576px;width:1897px;height:1px;background:#c6c6c6"></div>
<div class="a" style="left:0;top:576px;width:41px;height:1px;background:#777"></div>
<div class="a" style="left:42px;top:600px;width:1897px;height:1px;background:#c6c6c6"></div>
<div class="a" style="left:0;top:600px;width:41px;height:1px;background:#777"></div>
<div class="a" style="left:42px;top:624px;width:1897px;height:1px;background:#c6c6c6"></div>
<div class="a" style="left:0;top:624px;width:41px;height:1px;background:#777"></div>
<div class="a" style="left:42px;top:648px;width:1897px;height:1px;background:#c6c6c6"></div>
<div class="a" style="left:0;top:648px;width:41px;height:1px;background:#777"></div>
<div class="a" style="left:42px;top:672px;width:1897px;height:1px;background:#c6c6c6"></div>
<div class="a" style="left:0;top:672px;width:41px;height:1px;background:#777"></div>
<div class="a" style="left:42px;top:696px;width:1897px;height:1px;background:#c6c6c6"></div>
<div class="a" style="left:0;top:696px;width:41px;height:1px;background:#777"></div>
<div class="a" style="left:42px;top:720px;width:1897px;height:1px;background:#c6c6c6"></div>
<div class="a" style="left:0;top:720px;width:41px;height:1px;background:#777"></div>
<div class="a" style="left:42px;top:744px;width:1897px;height:1px;background:#c6c6c6"></div>
<div class="a" style="left:0;top:744px;width:41px;height:1px;background:#777"></div>
<div class="a" style="left:42px;top:768px;width:1897px;height:1px;background:#c6c6c6"></div>
<div class="a" style="left:0;top:768px;width:41px;height:1px;background:#777"></div>
<div class="a" style="left:42px;top:792px;width:1897px;height:1px;background:#c6c6c6"></div>
<div class="a" style="left:0;top:792px;width:41px;height:1px;background:#777"></div>
<div class="a" style="left:42px;top:816px;width:1897px;height:1px;background:#c6c6c6"></div>
<div class="a" style="left:0;top:816px;width:41px;height:1px;background:#777"></div>
<div class="t" style="left:-2px;width:41px;text-align:center;top:261.0px;font-size:18px;color:#222">1</div>
<div class="t" style="left:-2px;width:41px;text-align:center;top:294.0px;font-size:18px;color:#222">2</div>
<div class="t" style="left:-2px;width:41px;text-align:center;top:318.0px;font-size:18px;color:#222">3</div>
<div class="t" style="left:-2px;width:41px;text-align:center;top:342.0px;font-size:18px;color:#222">4</div>
<div class="t" style="left:-2px;width:41px;text-align:center;top:366.0px;font-size:18px;color:#222">5</div>
<div class="t" style="left:-2px;width:41px;text-align:center;top:390.0px;font-size:18px;color:#222">6</div>
<div class="t" style="left:-2px;width:41px;text-align:center;top:414.0px;font-size:18px;color:#222">7</div>
<div class="t" style="left:-2px;width:41px;text-align:center;top:438.0px;font-size:18px;color:#222">8</div>
<div class="t" style="left:-2px;width:41px;text-align:center;top:462.0px;font-size:18px;color:#222">9</div>
<div class="t" style="left:-2px;width:41px;text-align:center;top:486.0px;font-size:18px;color:#222">10</div>
<div class="t" style="left:-2px;width:41px;text-align:center;top:510.0px;font-size:18px;color:#222">11</div>
<div class="t" style="left:-2px;width:41px;text-align:center;top:534.0px;font-size:18px;color:#222">12</div>
<div class="t" style="left:-2px;width:41px;text-align:center;top:558.0px;font-size:18px;color:#222">13</div>
<div class="t" style="left:-2px;width:41px;text-align:center;top:582.0px;font-size:18px;color:#222">14</div>
<div class="t" style="left:-2px;width:41px;text-align:center;top:606.0px;font-size:18px;color:#222">15</div>
<div class="t" style="left:-2px;width:41px;text-align:center;top:630.0px;font-size:18px;color:#222">16</div>
<div class="t" style="left:-2px;width:41px;text-align:center;top:654.0px;font-size:18px;color:#222">17</div>
<div class="t" style="left:-2px;width:41px;text-align:center;top:678.0px;font-size:18px;color:#222">18</div>
<div class="t" style="left:-2px;width:41px;text-align:center;top:702.0px;font-size:18px;color:#222">19</div>
<div class="t" style="left:-2px;width:41px;text-align:center;top:726.0px;font-size:18px;color:#222">20</div>
<div class="t" style="left:-2px;width:41px;text-align:center;top:750.0px;font-size:18px;color:#222">21</div>
<div class="t" style="left:-2px;width:41px;text-align:center;top:774.0px;font-size:18px;color:#222">22</div>
<div class="t" style="left:-2px;width:41px;text-align:center;top:798.0px;font-size:18px;color:#222">23</div>
<div class="t" style="left:-2px;width:41px;text-align:center;top:822.0px;font-size:18px;color:#222">24</div>
<div class="a" style="left:42px;top:247px;width:136px;height:41px;"><div class="t" style="left:3px;top:-0.47px;font-size:36px;font-weight:bold;color:#000;transform:scaleY(1);transform-origin:0 30.47px">Cost reports (08.08.2025)</div></div>
<div class="a" style="left:42px;top:289px;width:136px;height:23px;overflow:hidden;"><div class="t" style="left:3px;top:-0.93px;font-size:20px;font-weight:bold;color:#000;transform:scaleY(1.075);transform-origin:0 16.93px">Date (Spent)</div></div>
<div class="a" style="left:179px;top:289px;width:213px;height:23px;overflow:hidden;"><div class="t" style="left:3px;top:-0.93px;font-size:20px;font-weight:bold;color:#000;transform:scaleY(1.075);transform-origin:0 16.93px">User</div></div>
<div class="a" style="left:393px;top:289px;width:150px;height:23px;overflow:hidden;"><div class="t" style="left:3px;top:-0.93px;font-size:20px;font-weight:bold;color:#000;transform:scaleY(1.075);transform-origin:0 16.93px">Activity</div></div>
<div class="a" style="left:544px;top:289px;width:658px;height:23px;overflow:hidden;"><div class="t" style="left:3px;top:-0.93px;font-size:20px;font-weight:bold;color:#000;transform:scaleY(1.075);transform-origin:0 16.93px">Logged for</div></div>
<div class="a" style="left:1203px;top:289px;width:86px;height:23px;overflow:hidden;"><div class="t" style="left:3px;top:5.07px;font-size:20px;font-weight:bold;color:#000;transform:scaleY(1.075);transform-origin:0 16.93px">Commen</div></div>
<div class="a" style="left:1296px;top:289px;width:217px;height:23px;overflow:hidden;"><div class="t" style="left:3px;top:-0.93px;font-size:20px;font-weight:bold;color:#000;transform:scaleY(1.075);transform-origin:0 16.93px">Project</div></div>
<div class="a" style="left:1514px;top:289px;width:75px;height:23px;overflow:hidden;"><div class="t" style="left:3px;top:-0.93px;font-size:20px;font-weight:bold;color:#000;transform:scaleY(1.075);transform-origin:0 16.93px">Units</div></div>
<div class="a" style="left:1590px;top:289px;width:180px;height:23px;overflow:hidden;"><div class="t" style="left:3px;top:-0.93px;font-size:20px;font-weight:bold;color:#000;transform:scaleY(1.075);transform-origin:0 16.93px">Cost type</div></div>
<div class="a" style="left:1771px;top:289px;width:157px;height:23px;overflow:hidden;"><div class="t" style="left:3px;top:-0.93px;font-size:20px;font-weight:bold;color:#000;transform:scaleY(1.075);transform-origin:0 16.93px">Costs</div></div>
<div class="a" style="left:42px;top:313px;width:136px;height:23px;overflow:hidden;"><div class="t" style="left:3px;top:5.07px;font-size:20px;color:#000;transform:scaleY(1.075);transform-origin:0 16.93px">2025-05-07</div></div>
<div class="a" style="left:179px;top:313px;width:213px;height:23px;overflow:hidden;"><div class="t" style="left:3px;top:5.07px;font-size:20px;color:#000;transform:scaleY(1.075);transform-origin:0 16.93px">Catherine Johnson</div></div>
<div class="a" style="left:393px;top:313px;width:150px;height:23px;overflow:hidden;"><div class="t" style="left:3px;top:5.07px;font-size:20px;color:#000;transform:scaleY(1.075);transform-origin:0 16.93px">-</div></div>
<div class="a" style="left:544px;top:313px;width:658px;height:23px;overflow:hidden;"><div class="t" style="left:3px;top:5.07px;font-size:20px;color:#000;transform:scaleY(1.075);transform-origin:0 16.93px">Task #129: Share project plan with stakeholders</div></div>
<div class="a" style="left:1203px;top:313px;width:92px;height:23px;overflow:hidden;"><div class="t" style="left:3px;top:5.07px;font-size:20px;color:#000;transform:scaleY(1.075);transform-origin:0 16.93px">-</div></div>
<div class="a" style="left:1296px;top:313px;width:217px;height:23px;overflow:hidden;"><div class="t" style="left:3px;top:5.07px;font-size:20px;color:#000;transform:scaleY(1.075);transform-origin:0 16.93px">Website development</div></div>
<div class="a" style="left:1514px;top:313px;width:75px;height:23px;overflow:hidden;"><div class="t" style="right:3px;top:5.07px;font-size:20px;color:#000;transform:scaleY(1.075);transform-origin:0 16.93px">220,00</div></div>
<div class="a" style="left:1590px;top:313px;width:180px;height:23px;overflow:hidden;"><div class="t" style="left:3px;top:5.07px;font-size:20px;color:#000;transform:scaleY(1.075);transform-origin:0 16.93px">Travel expenses</div></div>
<div class="a" style="left:1771px;top:313px;width:157px;height:23px;overflow:hidden;"><div class="t" style="right:3px;top:5.07px;font-size:20px;color:#000;transform:scaleY(1.075);transform-origin:0 16.93px">220,00 EUR</div></div>
<div class="a" style="left:42px;top:337px;width:136px;height:23px;overflow:hidden;"><div class="t" style="left:3px;top:5.07px;font-size:20px;color:#000;transform:scaleY(1.075);transform-origin:0 16.93px">2025-05-07</div></div>
<div class="a" style="left:179px;top:337px;width:213px;height:23px;overflow:hidden;"><div class="t" style="left:3px;top:5.07px;font-size:20px;color:#000;transform:scaleY(1.075);transform-origin:0 16.93px">Maya Berdygylyjova</div></div>
<div class="a" style="left:393px;top:337px;width:150px;height:23px;overflow:hidden;"><div class="t" style="left:3px;top:5.07px;font-size:20px;color:#000;transform:scaleY(1.075);transform-origin:0 16.93px">Development</div></div>
<div class="a" style="left:544px;top:337px;width:658px;height:23px;overflow:hidden;"><div class="t" style="left:3px;top:5.07px;font-size:20px;color:#000;transform:scaleY(1.075);transform-origin:0 16.93px">User story #67: Build core e-commerce features</div></div>
<div class="a" style="left:1203px;top:337px;width:92px;height:23px;overflow:hidden;"><div class="t" style="left:3px;top:5.07px;font-size:20px;color:#000;transform:scaleY(1.075);transform-origin:0 16.93px">-</div></div>
<div class="a" style="left:1296px;top:337px;width:217px;height:23px;overflow:hidden;"><div class="t" style="left:3px;top:5.07px;font-size:20px;color:#000;transform:scaleY(1.075);transform-origin:0 16.93px">Website development</div></div>
<div class="a" style="left:1514px;top:337px;width:75px;height:23px;overflow:hidden;"><div class="t" style="right:3px;top:5.07px;font-size:20px;color:#000;transform:scaleY(1.075);transform-origin:0 16.93px">3,50</div></div>
<div class="a" style="left:1590px;top:337px;width:180px;height:23px;overflow:hidden;"><div class="t" style="left:3px;top:5.07px;font-size:20px;color:#000;transform:scaleY(1.075);transform-origin:0 16.93px">Labor</div></div>
<div class="a" style="left:1771px;top:337px;width:157px;height:23px;overflow:hidden;"><div class="t" style="right:3px;top:5.07px;font-size:20px;color:#000;transform:scaleY(1.075);transform-origin:0 16.93px">1.050,00 EUR</div></div>
<div class="a" style="left:42px;top:361px;width:136px;height:23px;overflow:hidden;"><div class="t" style="left:3px;top:5.07px;font-size:20px;color:#000;transform:scaleY(1.075);transform-origin:0 16.93px">2025-05-08</div></div>
<div class="a" style="left:179px;top:361px;width:213px;height:23px;overflow:hidden;"><div class="t" style="left:3px;top:5.07px;font-size:20px;color:#000;transform:scaleY(1.075);transform-origin:0 16.93px">Catherine Johnson</div></div>
<div class="a" style="left:393px;top:361px;width:150px;height:23px;overflow:hidden;"><div class="t" style="left:3px;top:5.07px;font-size:20px;color:#000;transform:scaleY(1.075);transform-origin:0 16.93px">Management</div></div>
<div class="a" style="left:544px;top:361px;width:658px;height:23px;overflow:hidden;"><div class="t" style="left:3px;top:5.07px;font-size:20px;color:#000;transform:scaleY(1.075);transform-origin:0 16.93px">User story #52: Project plan creation</div></div>
<div class="a" style="left:1203px;top:361px;width:92px;height:23px;overflow:hidden;"><div class="t" style="left:3px;top:5.07px;font-size:20px;color:#000;transform:scaleY(1.075);transform-origin:0 16.93px">-</div></div>
<div class="a" style="left:1296px;top:361px;width:217px;height:23px;overflow:hidden;"><div class="t" style="left:3px;top:5.07px;font-size:20px;color:#000;transform:scaleY(1.075);transform-origin:0 16.93px">Website development</div></div>
<div class="a" style="left:1514px;top:361px;width:75px;height:23px;overflow:hidden;"><div class="t" style="right:3px;top:5.07px;font-size:20px;color:#000;transform:scaleY(1.075);transform-origin:0 16.93px">3,00</div></div>
<div class="a" style="left:1590px;top:361px;width:180px;height:23px;overflow:hidden;"><div class="t" style="left:3px;top:5.07px;font-size:20px;color:#000;transform:scaleY(1.075);transform-origin:0 16.93px">Labor</div></div>
<div class="a" style="left:1771px;top:361px;width:157px;height:23px;overflow:hidden;"><div class="t" style="right:3px;top:5.07px;font-size:20px;color:#000;transform:scaleY(1.075);transform-origin:0 16.93px">300,00 EUR</div></div>
<div class="a" style="left:42px;top:385px;width:136px;height:23px;overflow:hidden;"><div class="t" style="left:3px;top:5.07px;font-size:20px;color:#000;transform:scaleY(1.075);transform-origin:0 16.93px">2025-05-08</div></div>
<div class="a" style="left:179px;top:385px;width:213px;height:23px;overflow:hidden;"><div class="t" style="left:3px;top:5.07px;font-size:20px;color:#000;transform:scaleY(1.075);transform-origin:0 16.93px">Catherine Johnson</div></div>
<div class="a" style="left:393px;top:385px;width:150px;height:23px;overflow:hidden;"><div class="t" style="left:3px;top:5.07px;font-size:20px;color:#000;transform:scaleY(1.075);transform-origin:0 16.93px">Specification</div></div>
<div class="a" style="left:544px;top:385px;width:658px;height:23px;overflow:hidden;"><div class="t" style="left:3px;top:5.07px;font-size:20px;color:#000;transform:scaleY(1.075);transform-origin:0 16.93px">User story #59: Design review and approval</div></div>
<div class="a" style="left:1203px;top:385px;width:92px;height:23px;overflow:hidden;"><div class="t" style="left:3px;top:5.07px;font-size:20px;color:#000;transform:scaleY(1.075);transform-origin:0 16.93px">-</div></div>
<div class="a" style="left:1296px;top:385px;width:217px;height:23px;overflow:hidden;"><div class="t" style="left:3px;top:5.07px;font-size:20px;color:#000;transform:scaleY(1.075);transform-origin:0 16.93px">Website development</div></div>
<div class="a" style="left:1514px;top:385px;width:75px;height:23px;overflow:hidden;"><div class="t" style="right:3px;top:5.07px;font-size:20px;color:#000;transform:scaleY(1.075);transform-origin:0 16.93px">2,00</div></div>
<div class="a" style="left:1590px;top:385px;width:180px;height:23px;overflow:hidden;"><div class="t" style="left:3px;top:5.07px;font-size:20px;color:#000;transform:scaleY(1.075);transform-origin:0 16.93px">Labor</div></div>
<div class="a" style="left:1771px;top:385px;width:157px;height:23px;overflow:hidden;"><div class="t" style="right:3px;top:5.07px;font-size:20px;color:#000;transform:scaleY(1.075);transform-origin:0 16.93px">200,00 EUR</div></div>
<div class="a" style="left:42px;top:409px;width:136px;height:23px;overflow:hidden;"><div class="t" style="left:3px;top:5.07px;font-size:20px;color:#000;transform:scaleY(1.075);transform-origin:0 16.93px">2025-05-09</div></div>
<div class="a" style="left:179px;top:409px;width:213px;height:23px;overflow:hidden;"><div class="t" style="left:3px;top:5.07px;font-size:20px;color:#000;transform:scaleY(1.075);transform-origin:0 16.93px">Thomas Brickstone</div></div>
<div class="a" style="left:393px;top:409px;width:150px;height:23px;overflow:hidden;"><div class="t" style="left:3px;top:5.07px;font-size:20px;color:#000;transform:scaleY(1.075);transform-origin:0 16.93px">Management</div></div>
<div class="a" style="left:544px;top:409px;width:658px;height:23px;overflow:hidden;"><div class="t" style="left:3px;top:5.07px;font-size:20px;color:#000;transform:scaleY(1.075);transform-origin:0 16.93px">User story #51: Stakeholder meetings and requirements gathering</div></div>
<div class="a" style="left:1203px;top:409px;width:92px;height:23px;overflow:hidden;"><div class="t" style="left:3px;top:5.07px;font-size:20px;color:#000;transform:scaleY(1.075);transform-origin:0 16.93px">-</div></div>
<div class="a" style="left:1296px;top:409px;width:217px;height:23px;overflow:hidden;"><div class="t" style="left:3px;top:5.07px;font-size:20px;color:#000;transform:scaleY(1.075);transform-origin:0 16.93px">Website development</div></div>
<div class="a" style="left:1514px;top:409px;width:75px;height:23px;overflow:hidden;"><div class="t" style="right:3px;top:5.07px;font-size:20px;color:#000;transform:scaleY(1.075);transform-origin:0 16.93px">5,00</div></div>
<div class="a" style="left:1590px;top:409px;width:180px;height:23px;overflow:hidden;"><div class="t" style="left:3px;top:5.07px;font-size:20px;color:#000;transform:scaleY(1.075);transform-origin:0 16.93px">Labor</div></div>
<div class="a" style="left:1771px;top:409px;width:157px;height:23px;overflow:hidden;"><div class="t" style="right:3px;top:5.07px;font-size:20px;color:#000;transform:scaleY(1.075);transform-origin:0 16.93px">3.000,00 EUR</div></div>
<div class="a" style="left:42px;top:433px;width:136px;height:23px;overflow:hidden;"><div class="t" style="left:3px;top:5.07px;font-size:20px;color:#000;transform:scaleY(1.075);transform-origin:0 16.93px">2025-05-12</div></div>
<div class="a" style="left:179px;top:433px;width:213px;height:23px;overflow:hidden;"><div class="t" style="left:3px;top:5.07px;font-size:20px;color:#000;transform:scaleY(1.075);transform-origin:0 16.93px">Leonard Douglas</div></div>
<div class="a" style="left:393px;top:433px;width:150px;height:23px;overflow:hidden;"><div class="t" style="left:3px;top:5.07px;font-size:20px;color:#000;transform:scaleY(1.075);transform-origin:0 16.93px">Development</div></div>
<div class="a" style="left:544px;top:433px;width:658px;height:23px;overflow:hidden;"><div class="t" style="left:3px;top:5.07px;font-size:20px;color:#000;transform:scaleY(1.075);transform-origin:0 16.93px">User story #65: Set up server and database</div></div>
<div class="a" style="left:1203px;top:433px;width:92px;height:23px;overflow:hidden;"><div class="t" style="left:3px;top:5.07px;font-size:20px;color:#000;transform:scaleY(1.075);transform-origin:0 16.93px">-</div></div>
<div class="a" style="left:1296px;top:433px;width:217px;height:23px;overflow:hidden;"><div class="t" style="left:3px;top:5.07px;font-size:20px;color:#000;transform:scaleY(1.075);transform-origin:0 16.93px">Website development</div></div>
<div class="a" style="left:1514px;top:433px;width:75px;height:23px;overflow:hidden;"><div class="t" style="right:3px;top:5.07px;font-size:20px;color:#000;transform:scaleY(1.075);transform-origin:0 16.93px">3,00</div></div>
<div class="a" style="left:1590px;top:433px;width:180px;height:23px;overflow:hidden;"><div class="t" style="left:3px;top:5.07px;font-size:20px;color:#000;transform:scaleY(1.075);transform-origin:0 16.93px">Labor</div></div>
<div class="a" style="left:1771px;top:433px;width:157px;height:23px;overflow:hidden;"><div class="t" style="right:3px;top:5.07px;font-size:20px;color:#000;transform:scaleY(1.075);transform-origin:0 16.93px">0,00 EUR</div></div>
<div class="a" style="left:42px;top:457px;width:136px;height:23px;overflow:hidden;"><div class="t" style="left:3px;top:5.07px;font-size:20px;color:#000;transform:scaleY(1.075);transform-origin:0 16.93px">2025-05-12</div></div>
<div class="a" style="left:179px;top:457px;width:213px;height:23px;overflow:hidden;"><div class="t" style="left:3px;top:5.07px;font-size:20px;color:#000;transform:scaleY(1.075);transform-origin:0 16.93px">Catherine Johnson</div></div>
<div class="a" style="left:393px;top:457px;width:150px;height:23px;overflow:hidden;"><div class="t" style="left:3px;top:5.07px;font-size:20px;color:#000;transform:scaleY(1.075);transform-origin:0 16.93px">Specification</div></div>
<div class="a" style="left:544px;top:457px;width:658px;height:23px;overflow:hidden;"><div class="t" style="left:3px;top:5.07px;font-size:20px;color:#000;transform:scaleY(1.075);transform-origin:0 16.93px">Phase #62: Frontend development</div></div>
<div class="a" style="left:1203px;top:457px;width:92px;height:23px;overflow:hidden;"><div class="t" style="left:3px;top:5.07px;font-size:20px;color:#000;transform:scaleY(1.075);transform-origin:0 16.93px">-</div></div>
<div class="a" style="left:1296px;top:457px;width:217px;height:23px;overflow:hidden;"><div class="t" style="left:3px;top:5.07px;font-size:20px;color:#000;transform:scaleY(1.075);transform-origin:0 16.93px">Website development</div></div>
<div class="a" style="left:1514px;top:457px;width:75px;height:23px;overflow:hidden;"><div class="t" style="right:3px;top:5.07px;font-size:20px;color:#000;transform:scaleY(1.075);transform-origin:0 16.93px">2,00</div></div>
<div class="a" style="left:1590px;top:457px;width:180px;height:23px;overflow:hidden;"><div class="t" style="left:3px;top:5.07px;font-size:20px;color:#000;transform:scaleY(1.075);transform-origin:0 16.93px">Labor</div></div>
<div class="a" style="left:1771px;top:457px;width:157px;height:23px;overflow:hidden;"><div class="t" style="right:3px;top:5.07px;font-size:20px;color:#000;transform:scaleY(1.075);transform-origin:0 16.93px">200,00 EUR</div></div>
<div class="a" style="left:42px;top:481px;width:136px;height:23px;overflow:hidden;"><div class="t" style="left:3px;top:5.07px;font-size:20px;color:#000;transform:scaleY(1.075);transform-origin:0 16.93px">2025-05-12</div></div>
<div class="a" style="left:179px;top:481px;width:213px;height:23px;overflow:hidden;"><div class="t" style="left:3px;top:5.07px;font-size:20px;color:#000;transform:scaleY(1.075);transform-origin:0 16.93px">Catherine Johnson</div></div>
<div class="a" style="left:393px;top:481px;width:150px;height:23px;overflow:hidden;"><div class="t" style="left:3px;top:5.07px;font-size:20px;color:#000;transform:scaleY(1.075);transform-origin:0 16.93px">Specification</div></div>
<div class="a" style="left:544px;top:481px;width:658px;height:23px;overflow:hidden;"><div class="t" style="left:3px;top:5.07px;font-size:20px;color:#000;transform:scaleY(1.075);transform-origin:0 16.93px">Phase #62: Frontend development</div></div>
<div class="a" style="left:1203px;top:481px;width:92px;height:23px;overflow:hidden;"><div class="t" style="left:3px;top:5.07px;font-size:20px;color:#000;transform:scaleY(1.075);transform-origin:0 16.93px">-</div></div>
<div class="a" style="left:1296px;top:481px;width:217px;height:23px;overflow:hidden;"><div class="t" style="left:3px;top:5.07px;font-size:20px;color:#000;transform:scaleY(1.075);transform-origin:0 16.93px">Website development</div></div>
<div class="a" style="left:1514px;top:481px;width:75px;height:23px;overflow:hidden;"><div class="t" style="right:3px;top:5.07px;font-size:20px;color:#000;transform:scaleY(1.075);transform-origin:0 16.93px">2,00</div></div>
<div class="a" style="left:1590px;top:481px;width:180px;height:23px;overflow:hidden;"><div class="t" style="left:3px;top:5.07px;font-size:20px;color:#000;transform:scaleY(1.075);transform-origin:0 16.93px">Labor</div></div>
<div class="a" style="left:1771px;top:481px;width:157px;height:23px;overflow:hidden;"><div class="t" style="right:3px;top:5.07px;font-size:20px;color:#000;transform:scaleY(1.075);transform-origin:0 16.93px">200,00 EUR</div></div>
<div class="a" style="left:42px;top:505px;width:136px;height:23px;overflow:hidden;"><div class="t" style="left:3px;top:5.07px;font-size:20px;color:#000;transform:scaleY(1.075);transform-origin:0 16.93px">2025-05-13</div></div>
<div class="a" style="left:179px;top:505px;width:213px;height:23px;overflow:hidden;"><div class="t" style="left:3px;top:5.07px;font-size:20px;color:#000;transform:scaleY(1.075);transform-origin:0 16.93px">Maya Berdygylyjova</div></div>
<div class="a" style="left:393px;top:505px;width:150px;height:23px;overflow:hidden;"><div class="t" style="left:3px;top:5.07px;font-size:20px;color:#000;transform:scaleY(1.075);transform-origin:0 16.93px">-</div></div>
<div class="a" style="left:544px;top:505px;width:658px;height:23px;overflow:hidden;"><div class="t" style="left:3px;top:5.07px;font-size:20px;color:#000;transform:scaleY(1.075);transform-origin:0 16.93px">Phase #56: Design and Prototyping</div></div>
<div class="a" style="left:1203px;top:505px;width:92px;height:23px;overflow:hidden;"><div class="t" style="left:3px;top:5.07px;font-size:20px;color:#000;transform:scaleY(1.075);transform-origin:0 16.93px">-</div></div>
<div class="a" style="left:1296px;top:505px;width:217px;height:23px;overflow:hidden;"><div class="t" style="left:3px;top:5.07px;font-size:20px;color:#000;transform:scaleY(1.075);transform-origin:0 16.93px">Website development</div></div>
<div class="a" style="left:1514px;top:505px;width:75px;height:23px;overflow:hidden;"><div class="t" style="right:3px;top:5.07px;font-size:20px;color:#000;transform:scaleY(1.075);transform-origin:0 16.93px">3,00</div></div>
<div class="a" style="left:1590px;top:505px;width:180px;height:23px;overflow:hidden;"><div class="t" style="left:3px;top:5.07px;font-size:20px;color:#000;transform:scaleY(1.075);transform-origin:0 16.93px">Labor</div></div>
<div class="a" style="left:1771px;top:505px;width:157px;height:23px;overflow:hidden;"><div class="t" style="right:3px;top:5.07px;font-size:20px;color:#000;transform:scaleY(1.075);transform-origin:0 16.93px">900,00 EUR</div></div>
<div class="a" style="left:42px;top:529px;width:136px;height:23px;overflow:hidden;"><div class="t" style="left:3px;top:5.07px;font-size:20px;color:#000;transform:scaleY(1.075);transform-origin:0 16.93px">2025-05-13</div></div>
<div class="a" style="left:179px;top:529px;width:213px;height:23px;overflow:hidden;"><div class="t" style="left:3px;top:5.07px;font-size:20px;color:#000;transform:scaleY(1.075);transform-origin:0 16.93px">Maya Berdygylyjova</div></div>
<div class="a" style="left:393px;top:529px;width:150px;height:23px;overflow:hidden;"><div class="t" style="left:3px;top:5.07px;font-size:20px;color:#000;transform:scaleY(1.075);transform-origin:0 16.93px">Support</div></div>
<div class="a" style="left:544px;top:529px;width:658px;height:23px;overflow:hidden;"><div class="t" style="left:3px;top:5.07px;font-size:20px;color:#000;transform:scaleY(1.075);transform-origin:0 16.93px">Phase #56: Design and Prototyping</div></div>
<div class="a" style="left:1203px;top:529px;width:92px;height:23px;overflow:hidden;"><div class="t" style="left:3px;top:5.07px;font-size:20px;color:#000;transform:scaleY(1.075);transform-origin:0 16.93px">-</div></div>
<div class="a" style="left:1296px;top:529px;width:217px;height:23px;overflow:hidden;"><div class="t" style="left:3px;top:5.07px;font-size:20px;color:#000;transform:scaleY(1.075);transform-origin:0 16.93px">Website development</div></div>
<div class="a" style="left:1514px;top:529px;width:75px;height:23px;overflow:hidden;"><div class="t" style="right:3px;top:5.07px;font-size:20px;color:#000;transform:scaleY(1.075);transform-origin:0 16.93px">20,00</div></div>
<div class="a" style="left:1590px;top:529px;width:180px;height:23px;overflow:hidden;"><div class="t" style="left:3px;top:5.07px;font-size:20px;color:#000;transform:scaleY(1.075);transform-origin:0 16.93px">Labor</div></div>
<div class="a" style="left:1771px;top:529px;width:157px;height:23px;overflow:hidden;"><div class="t" style="right:3px;top:5.07px;font-size:20px;color:#000;transform:scaleY(1.075);transform-origin:0 16.93px">6.000,00 EUR</div></div>
<div class="a" style="left:42px;top:553px;width:136px;height:23px;overflow:hidden;"><div class="t" style="left:3px;top:5.07px;font-size:20px;color:#000;transform:scaleY(1.075);transform-origin:0 16.93px">2025-06-30</div></div>
<div class="a" style="left:179px;top:553px;width:213px;height:23px;overflow:hidden;"><div class="t" style="left:3px;top:5.07px;font-size:20px;color:#000;transform:scaleY(1.075);transform-origin:0 16.93px">Maya Berdygylyjova</div></div>
<div class="a" style="left:393px;top:553px;width:150px;height:23px;overflow:hidden;"><div class="t" style="left:3px;top:5.07px;font-size:20px;color:#000;transform:scaleY(1.075);transform-origin:0 16.93px">Testing</div></div>
<div class="a" style="left:544px;top:553px;width:658px;height:23px;overflow:hidden;"><div class="t" style="left:3px;top:5.07px;font-size:20px;color:#000;transform:scaleY(1.075);transform-origin:0 16.93px">User story #67: Build core e-commerce features</div></div>
<div class="a" style="left:1203px;top:553px;width:92px;height:23px;overflow:hidden;"><div class="t" style="left:3px;top:5.07px;font-size:20px;color:#000;transform:scaleY(1.075);transform-origin:0 16.93px">-</div></div>
<div class="a" style="left:1296px;top:553px;width:217px;height:23px;overflow:hidden;"><div class="t" style="left:3px;top:5.07px;font-size:20px;color:#000;transform:scaleY(1.075);transform-origin:0 16.93px">Website development</div></div>
<div class="a" style="left:1514px;top:553px;width:75px;height:23px;overflow:hidden;"><div class="t" style="right:3px;top:5.07px;font-size:20px;color:#000;transform:scaleY(1.075);transform-origin:0 16.93px">2,50</div></div>
<div class="a" style="left:1590px;top:553px;width:180px;height:23px;overflow:hidden;"><div class="t" style="left:3px;top:5.07px;font-size:20px;color:#000;transform:scaleY(1.075);transform-origin:0 16.93px">Labor</div></div>
<div class="a" style="left:1771px;top:553px;width:157px;height:23px;overflow:hidden;"><div class="t" style="right:3px;top:5.07px;font-size:20px;color:#000;transform:scaleY(1.075);transform-origin:0 16.93px">750,00 EUR</div></div>
<div class="a" style="left:42px;top:577px;width:136px;height:23px;overflow:hidden;"><div class="t" style="left:3px;top:5.07px;font-size:20px;color:#000;transform:scaleY(1.075);transform-origin:0 16.93px">2025-07-09</div></div>
<div class="a" style="left:179px;top:577px;width:213px;height:23px;overflow:hidden;"><div class="t" style="left:3px;top:5.07px;font-size:20px;color:#000;transform:scaleY(1.075);transform-origin:0 16.93px">Dicle Naz Tohumcu</div></div>
<div class="a" style="left:393px;top:577px;width:150px;height:23px;overflow:hidden;"><div class="t" style="left:3px;top:5.07px;font-size:20px;color:#000;transform:scaleY(1.075);transform-origin:0 16.93px">-</div></div>
<div class="a" style="left:544px;top:577px;width:658px;height:23px;overflow:hidden;"><div class="t" style="left:3px;top:5.07px;font-size:20px;color:#000;transform:scaleY(1.075);transform-origin:0 16.93px">Task #269: New Global Page Updates</div></div>
<div class="a" style="left:1203px;top:577px;width:92px;height:23px;overflow:hidden;"><div class="t" style="left:3px;top:5.07px;font-size:20px;color:#000;transform:scaleY(1.075);transform-origin:0 16.93px">-</div></div>
<div class="a" style="left:1296px;top:577px;width:217px;height:23px;overflow:hidden;"><div class="t" style="left:3px;top:5.07px;font-size:20px;color:#000;transform:scaleY(1.075);transform-origin:0 16.93px">Website development</div></div>
<div class="a" style="left:1514px;top:577px;width:75px;height:23px;overflow:hidden;"><div class="t" style="right:3px;top:5.07px;font-size:20px;color:#000;transform:scaleY(1.075);transform-origin:0 16.93px">5,50</div></div>
<div class="a" style="left:1590px;top:577px;width:180px;height:23px;overflow:hidden;"><div class="t" style="left:3px;top:5.07px;font-size:20px;color:#000;transform:scaleY(1.075);transform-origin:0 16.93px">Labor</div></div>
<div class="a" style="left:1771px;top:577px;width:157px;height:23px;overflow:hidden;"><div class="t" style="right:3px;top:5.07px;font-size:20px;color:#000;transform:scaleY(1.075);transform-origin:0 16.93px">0,00 EUR</div></div>
<div class="a" style="left:42px;top:601px;width:136px;height:23px;overflow:hidden;"><div class="t" style="left:3px;top:5.07px;font-size:20px;color:#000;transform:scaleY(1.075);transform-origin:0 16.93px">2025-07-10</div></div>
<div class="a" style="left:179px;top:601px;width:213px;height:23px;overflow:hidden;"><div class="t" style="left:3px;top:5.07px;font-size:20px;color:#000;transform:scaleY(1.075);transform-origin:0 16.93px">Dicle Naz Tohumcu</div></div>
<div class="a" style="left:393px;top:601px;width:150px;height:23px;overflow:hidden;"><div class="t" style="left:3px;top:5.07px;font-size:20px;color:#000;transform:scaleY(1.075);transform-origin:0 16.93px">-</div></div>
<div class="a" style="left:544px;top:601px;width:658px;height:23px;overflow:hidden;"><div class="t" style="left:3px;top:5.07px;font-size:20px;color:#000;transform:scaleY(1.075);transform-origin:0 16.93px">Task #269: New Global Page Updates</div></div>
<div class="a" style="left:1203px;top:601px;width:92px;height:23px;overflow:hidden;"><div class="t" style="left:3px;top:5.07px;font-size:20px;color:#000;transform:scaleY(1.075);transform-origin:0 16.93px">-</div></div>
<div class="a" style="left:1296px;top:601px;width:217px;height:23px;overflow:hidden;"><div class="t" style="left:3px;top:5.07px;font-size:20px;color:#000;transform:scaleY(1.075);transform-origin:0 16.93px">Website development</div></div>
<div class="a" style="left:1514px;top:601px;width:75px;height:23px;overflow:hidden;"><div class="t" style="right:3px;top:5.07px;font-size:20px;color:#000;transform:scaleY(1.075);transform-origin:0 16.93px">8,00</div></div>
<div class="a" style="left:1590px;top:601px;width:180px;height:23px;overflow:hidden;"><div class="t" style="left:3px;top:5.07px;font-size:20px;color:#000;transform:scaleY(1.075);transform-origin:0 16.93px">Labor</div></div>
<div class="a" style="left:1771px;top:601px;width:157px;height:23px;overflow:hidden;"><div class="t" style="right:3px;top:5.07px;font-size:20px;color:#000;transform:scaleY(1.075);transform-origin:0 16.93px">0,00 EUR</div></div>
<div class="a" style="left:42px;top:625px;width:136px;height:23px;overflow:hidden;"><div class="t" style="left:3px;top:5.07px;font-size:20px;color:#000;transform:scaleY(1.075);transform-origin:0 16.93px">2025-07-15</div></div>
<div class="a" style="left:179px;top:625px;width:213px;height:23px;overflow:hidden;"><div class="t" style="left:3px;top:5.07px;font-size:20px;color:#000;transform:scaleY(1.075);transform-origin:0 16.93px">Leonard Douglas</div></div>
<div class="a" style="left:393px;top:625px;width:150px;height:23px;overflow:hidden;"><div class="t" style="left:3px;top:5.07px;font-size:20px;color:#000;transform:scaleY(1.075);transform-origin:0 16.93px">-</div></div>
<div class="a" style="left:544px;top:625px;width:658px;height:23px;overflow:hidden;"><div class="t" style="left:3px;top:5.07px;font-size:20px;color:#000;transform:scaleY(1.075);transform-origin:0 16.93px">Milestone #60: Approved website design mockups and wireframes</div></div>
<div class="a" style="left:1203px;top:625px;width:92px;height:23px;overflow:hidden;"><div class="t" style="left:3px;top:5.07px;font-size:20px;color:#000;transform:scaleY(1.075);transform-origin:0 16.93px">-</div></div>
<div class="a" style="left:1296px;top:625px;width:217px;height:23px;overflow:hidden;"><div class="t" style="left:3px;top:5.07px;font-size:20px;color:#000;transform:scaleY(1.075);transform-origin:0 16.93px">Website development</div></div>
<div class="a" style="left:1514px;top:625px;width:75px;height:23px;overflow:hidden;"><div class="t" style="right:3px;top:5.07px;font-size:20px;color:#000;transform:scaleY(1.075);transform-origin:0 16.93px">6,00</div></div>
<div class="a" style="left:1590px;top:625px;width:180px;height:23px;overflow:hidden;"><div class="t" style="left:3px;top:5.07px;font-size:20px;color:#000;transform:scaleY(1.075);transform-origin:0 16.93px">Labor</div></div>
<div class="a" style="left:1771px;top:625px;width:157px;height:23px;overflow:hidden;"><div class="t" style="right:3px;top:5.07px;font-size:20px;color:#000;transform:scaleY(1.075);transform-origin:0 16.93px">0,00 EUR</div></div>
<div class="a" style="left:42px;top:649px;width:136px;height:23px;overflow:hidden;"><div class="t" style="left:3px;top:5.07px;font-size:20px;color:#000;transform:scaleY(1.075);transform-origin:0 16.93px">2025-07-15</div></div>
<div class="a" style="left:179px;top:649px;width:213px;height:23px;overflow:hidden;"><div class="t" style="left:3px;top:5.07px;font-size:20px;color:#000;transform:scaleY(1.075);transform-origin:0 16.93px">Maya Berdygylyjova</div></div>
<div class="a" style="left:393px;top:649px;width:150px;height:23px;overflow:hidden;"><div class="t" style="left:3px;top:5.07px;font-size:20px;color:#000;transform:scaleY(1.075);transform-origin:0 16.93px">Specification</div></div>
<div class="a" style="left:544px;top:649px;width:658px;height:23px;overflow:hidden;"><div class="t" style="left:3px;top:5.07px;font-size:20px;color:#000;transform:scaleY(1.075);transform-origin:0 16.93px">Task #129: Share project plan with stakeholders</div></div>
<div class="a" style="left:1203px;top:649px;width:92px;height:23px;overflow:hidden;"><div class="t" style="left:3px;top:5.07px;font-size:20px;color:#000;transform:scaleY(1.075);transform-origin:0 16.93px">-</div></div>
<div class="a" style="left:1296px;top:649px;width:217px;height:23px;overflow:hidden;"><div class="t" style="left:3px;top:5.07px;font-size:20px;color:#000;transform:scaleY(1.075);transform-origin:0 16.93px">Website development</div></div>
<div class="a" style="left:1514px;top:649px;width:75px;height:23px;overflow:hidden;"><div class="t" style="right:3px;top:5.07px;font-size:20px;color:#000;transform:scaleY(1.075);transform-origin:0 16.93px">2,00</div></div>
<div class="a" style="left:1590px;top:649px;width:180px;height:23px;overflow:hidden;"><div class="t" style="left:3px;top:5.07px;font-size:20px;color:#000;transform:scaleY(1.075);transform-origin:0 16.93px">Labor</div></div>
<div class="a" style="left:1771px;top:649px;width:157px;height:23px;overflow:hidden;"><div class="t" style="right:3px;top:5.07px;font-size:20px;color:#000;transform:scaleY(1.075);transform-origin:0 16.93px">600,00 EUR</div></div>
<div class="a" style="left:42px;top:673px;width:136px;height:23px;overflow:hidden;"><div class="t" style="left:3px;top:5.07px;font-size:20px;color:#000;transform:scaleY(1.075);transform-origin:0 16.93px">2025-08-04</div></div>
<div class="a" style="left:179px;top:673px;width:213px;height:23px;overflow:hidden;"><div class="t" style="left:3px;top:5.07px;font-size:20px;color:#000;transform:scaleY(1.075);transform-origin:0 16.93px">Catherine Johnson</div></div>
<div class="a" style="left:393px;top:673px;width:150px;height:23px;overflow:hidden;"><div class="t" style="left:3px;top:5.07px;font-size:20px;color:#000;transform:scaleY(1.075);transform-origin:0 16.93px">Management</div></div>
<div class="a" style="left:544px;top:673px;width:658px;height:23px;overflow:hidden;"><div class="t" style="left:3px;top:5.07px;font-size:20px;color:#000;transform:scaleY(1.075);transform-origin:0 16.93px">Task #128: Organize initial stakeholder meeting</div></div>
<div class="a" style="left:1203px;top:673px;width:92px;height:23px;overflow:hidden;"><div class="t" style="left:3px;top:5.07px;font-size:20px;color:#000;transform:scaleY(1.075);transform-origin:0 16.93px">-</div></div>
<div class="a" style="left:1296px;top:673px;width:217px;height:23px;overflow:hidden;"><div class="t" style="left:3px;top:5.07px;font-size:20px;color:#000;transform:scaleY(1.075);transform-origin:0 16.93px">Website development</div></div>
<div class="a" style="left:1514px;top:673px;width:75px;height:23px;overflow:hidden;"><div class="t" style="right:3px;top:5.07px;font-size:20px;color:#000;transform:scaleY(1.075);transform-origin:0 16.93px">3,00</div></div>
<div class="a" style="left:1590px;top:673px;width:180px;height:23px;overflow:hidden;"><div class="t" style="left:3px;top:5.07px;font-size:20px;color:#000;transform:scaleY(1.075);transform-origin:0 16.93px">Labor</div></div>
<div class="a" style="left:1771px;top:673px;width:157px;height:23px;overflow:hidden;"><div class="t" style="right:3px;top:5.07px;font-size:20px;color:#000;transform:scaleY(1.075);transform-origin:0 16.93px">300,00 EUR</div></div>
<div class="a" style="left:42px;top:697px;width:136px;height:23px;overflow:hidden;"><div class="t" style="left:3px;top:5.07px;font-size:20px;color:#000;transform:scaleY(1.075);transform-origin:0 16.93px">2025-08-08</div></div>
<div class="a" style="left:179px;top:697px;width:213px;height:23px;overflow:hidden;"><div class="t" style="left:3px;top:5.07px;font-size:20px;color:#000;transform:scaleY(1.075);transform-origin:0 16.93px">Maya Berdygylyjova</div></div>
<div class="a" style="left:393px;top:697px;width:150px;height:23px;overflow:hidden;"><div class="t" style="left:3px;top:5.07px;font-size:20px;color:#000;transform:scaleY(1.075);transform-origin:0 16.93px">-</div></div>
<div class="a" style="left:544px;top:697px;width:658px;height:23px;overflow:hidden;"><div class="t" style="left:3px;top:5.07px;font-size:20px;color:#000;transform:scaleY(1.075);transform-origin:0 16.93px">Milestone #60: Approved website design mockups and wireframes</div></div>
<div class="a" style="left:1203px;top:697px;width:92px;height:23px;overflow:hidden;"><div class="t" style="left:3px;top:5.07px;font-size:20px;color:#000;transform:scaleY(1.075);transform-origin:0 16.93px">-</div></div>
<div class="a" style="left:1296px;top:697px;width:217px;height:23px;overflow:hidden;"><div class="t" style="left:3px;top:5.07px;font-size:20px;color:#000;transform:scaleY(1.075);transform-origin:0 16.93px">Website development</div></div>
<div class="a" style="left:1514px;top:697px;width:75px;height:23px;overflow:hidden;"><div class="t" style="right:3px;top:5.07px;font-size:20px;color:#000;transform:scaleY(1.075);transform-origin:0 16.93px">450,00</div></div>
<div class="a" style="left:1590px;top:697px;width:180px;height:23px;overflow:hidden;"><div class="t" style="left:3px;top:5.07px;font-size:20px;color:#000;transform:scaleY(1.075);transform-origin:0 16.93px">Travel expenses</div></div>
<div class="a" style="left:1771px;top:697px;width:157px;height:23px;overflow:hidden;"><div class="t" style="right:3px;top:5.07px;font-size:20px;color:#000;transform:scaleY(1.075);transform-origin:0 16.93px">450,00 EUR</div></div>
<div class="a" style="left:1771px;top:721px;width:157px;height:23px;overflow:hidden;"><div class="t" style="right:3px;top:5.07px;font-size:20px;font-weight:bold;color:#000;transform:scaleY(1.075);transform-origin:0 16.93px">14.170,00 EUR</div></div>
<svg class="a" style="left:0;top:0" width="1939" height="820" viewBox="0 0 1939 820"><defs><clipPath id="cl1"><rect x="42" y="247" width="1897" height="41"/></clipPath><clipPath id="cl2"><rect x="42" y="289" width="1897" height="23"/></clipPath><clipPath id="cl3"><rect x="42" y="313" width="1897" height="23"/></clipPath><clipPath id="cl4"><rect x="42" y="337" width="1897" height="23"/></clipPath><clipPath id="cl5"><rect x="42" y="361" width="1897" height="23"/></clipPath><clipPath id="cl6"><rect x="42" y="385" width="1897" height="23"/></clipPath><clipPath id="cl7"><rect x="42" y="409" width="1897" height="23"/></clipPath><clipPath id="cl8"><rect x="42" y="433" width="1897" height="23"/></clipPath><clipPath id="cl9"><rect x="42" y="457" width="1897" height="23"/></clipPath><clipPath id="cl10"><rect x="42" y="481" width="1897" height="23"/></clipPath><clipPath id="cl11"><rect x="42" y="505" width="1897" height="23"/></clipPath><clipPath id="cl12"><rect x="42" y="529" width="1897" height="23"/></clipPath><clipPath id="cl13"><rect x="42" y="553" width="1897" height="23"/></clipPath><clipPath id="cl14"><rect x="42" y="577" width="1897" height="23"/></clipPath><clipPath id="cl15"><rect x="42" y="601" width="1897" height="23"/></clipPath><clipPath id="cl16"><rect x="42" y="625" width="1897" height="23"/></clipPath><clipPath id="cl17"><rect x="42" y="649" width="1897" height="23"/></clipPath><clipPath id="cl18"><rect x="42" y="673" width="1897" height="23"/></clipPath><clipPath id="cl19"><rect x="42" y="697" width="1897" height="23"/></clipPath></defs><g clip-path="url(#cl1)" fill="none" stroke="#ff4a4a" stroke-width="1.2"><path d="M45.0 277.2L49.0 280.5L53.0 277.2L57.0 280.5L61.0 277.2L65.0 280.5L69.0 277.2L73.0 280.5L77.0 277.2L81.0 280.5L85.0 277.2L89.0 280.5L93.0 277.2L97.0 280.5L101.0 277.2L105.0 280.5L109.0 277.2L113.0 280.5L117.0 277.2L121.0 280.5L125.0 277.2" /><path d="M135.0 277.2L139.0 280.5L143.0 277.2L147.0 280.5L151.0 277.2L155.0 280.5L159.0 277.2L163.0 280.5L167.0 277.2L171.0 280.5L175.0 277.2L179.0 280.5L183.0 277.2L187.0 280.5L191.0 277.2L195.0 280.5L199.0 277.2L203.0 280.5L207.0 277.2L211.0 280.5L215.0 277.2L219.0 280.5L223.0 277.2L227.0 280.5L231.0 277.2L235.0 280.5L239.0 277.2L243.0 280.5L247.0 277.2L251.0 280.5L255.0 277.2L259.0 280.5" /></g><g clip-path="url(#cl2)" fill="none" stroke="#ff4a4a" stroke-width="1.2"><path d="M45.0 305.2L49.0 308.5L53.0 305.2L57.0 308.5L61.0 305.2L65.0 308.5L69.0 305.2L73.0 308.5L77.0 305.2L81.0 308.5L85.0 305.2" /><path d="M396.0 305.2L400.0 308.5L404.0 305.2L408.0 308.5L412.0 305.2L416.0 308.5L420.0 305.2L424.0 308.5L428.0 305.2L432.0 308.5L436.0 305.2L440.0 308.5L444.0 305.2L448.0 308.5L452.0 305.2L456.0 308.5L460.0 305.2L464.0 308.5L468.0 305.2" /><path d="M547.0 305.2L551.0 308.5L555.0 305.2L559.0 308.5L563.0 305.2L567.0 308.5L571.0 305.2L575.0 308.5L579.0 305.2L583.0 308.5L587.0 305.2L591.0 308.5L595.0 305.2L599.0 308.5L603.0 305.2L607.0 308.5L611.0 305.2L615.0 308.5L619.0 305.2" /><path d="M624.8 305.2L628.8 308.5L632.8 305.2L636.8 308.5L640.8 305.2L644.8 308.5L648.8 305.2" /><path d="M1206.0 311.2L1210.0 314.5L1214.0 311.2L1218.0 314.5L1222.0 311.2L1226.0 314.5L1230.0 311.2L1234.0 314.5L1238.0 311.2L1242.0 314.5L1246.0 311.2L1250.0 314.5L1254.0 311.2L1258.0 314.5L1262.0 311.2L1266.0 314.5L1270.0 311.2L1274.0 314.5L1278.0 311.2L1282.0 314.5L1286.0 311.2L1290.0 314.5" /><path d="M1299.0 305.2L1303.0 308.5L1307.0 305.2L1311.0 308.5L1315.0 305.2L1319.0 308.5L1323.0 305.2L1327.0 308.5L1331.0 305.2L1335.0 308.5L1339.0 305.2L1343.0 308.5L1347.0 305.2L1351.0 308.5L1355.0 305.2L1359.0 308.5L1363.0 305.2" /><path d="M1517.0 305.2L1521.0 308.5L1525.0 305.2L1529.0 308.5L1533.0 305.2L1537.0 308.5L1541.0 305.2L1545.0 308.5L1549.0 305.2L1553.0 308.5L1557.0 305.2L1561.0 308.5L1565.0 305.2" /><path d="M1593.0 305.2L1597.0 308.5L1601.0 305.2L1605.0 308.5L1609.0 305.2L1613.0 308.5L1617.0 305.2L1621.0 308.5L1625.0 305.2L1629.0 308.5L1633.0 305.2L1637.0 308.5" /><path d="M1643.0 305.2L1647.0 308.5L1651.0 305.2L1655.0 308.5L1659.0 305.2L1663.0 308.5L1667.0 305.2L1671.0 308.5L1675.0 305.2L1679.0 308.5L1683.0 305.2" /><path d="M1774.0 305.2L1778.0 308.5L1782.0 305.2L1786.0 308.5L1790.0 305.2L1794.0 308.5L1798.0 305.2L1802.0 308.5L1806.0 305.2L1810.0 308.5L1814.0 305.2L1818.0 308.5L1822.0 305.2L1826.0 308.5" /></g><g clip-path="url(#cl3)" fill="none" stroke="#ff4a4a" stroke-width="1.2"><path d="M649.3 334.4L653.3 337.7L657.3 334.4L661.3 337.7L665.3 334.4L669.3 337.7L673.3 334.4L677.3 337.7L681.3 334.4L685.3 337.7L689.3 334.4L693.3 337.7L697.3 334.4L701.3 337.7" /><path d="M708.2 334.4L712.2 337.7L716.2 334.4L720.2 337.7L724.2 334.4L728.2 337.7L732.2 334.4L736.2 337.7L740.2 334.4L744.2 337.7L748.2 334.4L752.2 337.7L756.2 334.4L760.2 337.7L764.2 334.4L768.2 337.7" /><path d="M817.2 334.4L821.2 337.7L825.2 334.4L829.2 337.7L833.2 334.4L837.2 337.7L841.2 334.4L845.2 337.7L849.2 334.4" /><path d="M858.3 334.4L862.3 337.7L866.3 334.4L870.3 337.7L874.3 334.4L878.3 337.7L882.3 334.4L886.3 337.7L890.3 334.4L894.3 337.7L898.3 334.4L902.3 337.7L906.3 334.4L910.3 337.7L914.3 334.4L918.3 337.7L922.3 334.4L926.3 337.7L930.3 334.4L934.3 337.7L938.3 334.4L942.3 337.7L946.3 334.4L950.3 337.7L954.3 334.4L958.3 337.7L962.3 334.4L966.3 337.7L970.3 334.4" /><path d="M1376.5 334.4L1380.5 337.7L1384.5 334.4L1388.5 337.7L1392.5 334.4L1396.5 337.7L1400.5 334.4L1404.5 337.7L1408.5 334.4L1412.5 337.7L1416.5 334.4L1420.5 337.7L1424.5 334.4L1428.5 337.7L1432.5 334.4L1436.5 337.7L1440.5 334.4L1444.5 337.7L1448.5 334.4L1452.5 337.7L1456.5 334.4L1460.5 337.7L1464.5 334.4L1468.5 337.7L1472.5 334.4L1476.5 337.7L1480.5 334.4L1484.5 337.7L1488.5 334.4" /><path d="M1593.0 334.4L1597.0 337.7L1601.0 334.4L1605.0 337.7L1609.0 334.4L1613.0 337.7L1617.0 334.4L1621.0 337.7L1625.0 334.4L1629.0 337.7L1633.0 334.4L1637.0 337.7L1641.0 334.4L1645.0 337.7" /><path d="M1653.4 334.4L1657.4 337.7L1661.4 334.4L1665.4 337.7L1669.4 334.4L1673.4 337.7L1677.4 334.4L1681.4 337.7L1685.4 334.4L1689.4 337.7L1693.4 334.4L1697.4 337.7L1701.4 334.4L1705.4 337.7L1709.4 334.4L1713.4 337.7L1717.4 334.4L1721.4 337.7L1725.4 334.4L1729.4 337.7L1733.4 334.4L1737.4 337.7" /></g><g clip-path="url(#cl4)" fill="none" stroke="#ff4a4a" stroke-width="1.2"><path d="M236.5 358.4L240.5 361.7L244.5 358.4L248.5 361.7L252.5 358.4L256.5 361.7L260.5 358.4L264.5 361.7L268.5 358.4L272.5 361.7L276.5 358.4L280.5 361.7L284.5 358.4L288.5 361.7L292.5 358.4L296.5 361.7L300.5 358.4L304.5 361.7L308.5 358.4L312.5 361.7L316.5 358.4L320.5 361.7L324.5 358.4L328.5 361.7L332.5 358.4L336.5 361.7L340.5 358.4L344.5 361.7L348.5 358.4L352.5 361.7L356.5 358.4L360.5 361.7" /><path d="M396.0 358.4L400.0 361.7L404.0 358.4L408.0 361.7L412.0 358.4L416.0 361.7L420.0 358.4L424.0 361.7L428.0 358.4L432.0 361.7L436.0 358.4L440.0 361.7L444.0 358.4L448.0 361.7L452.0 358.4L456.0 361.7L460.0 358.4L464.0 361.7L468.0 358.4L472.0 361.7L476.0 358.4L480.0 361.7L484.0 358.4L488.0 361.7L492.0 358.4L496.0 361.7L500.0 358.4L504.0 361.7L508.0 358.4L512.0 361.7" /><path d="M594.8 358.4L598.8 361.7L602.8 358.4L606.8 361.7L610.8 358.4L614.8 361.7L618.8 358.4L622.8 361.7L626.8 358.4L630.8 361.7L634.8 358.4" /><path d="M688.2 358.4L692.2 361.7L696.2 358.4L700.2 361.7L704.2 358.4L708.2 361.7L712.2 358.4L716.2 361.7L720.2 358.4L724.2 361.7L728.2 358.4L732.2 361.7" /><path d="M738.2 358.4L742.2 361.7L746.2 358.4L750.2 361.7L754.2 358.4L758.2 361.7L762.2 358.4L766.2 361.7L770.2 358.4L774.2 361.7" /><path d="M782.7 358.4L786.7 361.7L790.7 358.4L794.7 361.7L798.7 358.4L802.7 361.7L806.7 358.4L810.7 361.7L814.7 358.4L818.7 361.7L822.7 358.4L826.7 361.7L830.7 358.4L834.7 361.7L838.7 358.4L842.7 361.7L846.7 358.4L850.7 361.7L854.7 358.4L858.7 361.7L862.7 358.4L866.7 361.7L870.7 358.4L874.7 361.7L878.7 358.4L882.7 361.7L886.7 358.4L890.7 361.7" /><path d="M899.4 358.4L903.4 361.7L907.4 358.4L911.4 361.7L915.4 358.4L919.4 361.7L923.4 358.4L927.4 361.7L931.4 358.4L935.4 361.7L939.4 358.4L943.4 361.7L947.4 358.4L951.4 361.7L955.4 358.4L959.4 361.7L963.4 358.4L967.4 361.7L971.4 358.4" /><path d="M1376.5 358.4L1380.5 361.7L1384.5 358.4L1388.5 361.7L1392.5 358.4L1396.5 361.7L1400.5 358.4L1404.5 361.7L1408.5 358.4L1412.5 361.7L1416.5 358.4L1420.5 361.7L1424.5 358.4L1428.5 361.7L1432.5 358.4L1436.5 361.7L1440.5 358.4L1444.5 361.7L1448.5 358.4L1452.5 361.7L1456.5 358.4L1460.5 361.7L1464.5 358.4L1468.5 361.7L1472.5 358.4L1476.5 361.7L1480.5 358.4L1484.5 361.7L1488.5 358.4" /></g><g clip-path="url(#cl5)" fill="none" stroke="#ff4a4a" stroke-width="1.2"><path d="M594.8 382.4L598.8 385.7L602.8 382.4L606.8 385.7L610.8 382.4L614.8 385.7L618.8 382.4L622.8 385.7L626.8 382.4L630.8 385.7L634.8 382.4" /><path d="M688.2 382.4L692.2 385.7L696.2 382.4L700.2 385.7L704.2 382.4L708.2 385.7L712.2 382.4L716.2 385.7L720.2 382.4L724.2 385.7L728.2 382.4L732.2 385.7L736.2 382.4L740.2 385.7L744.2 382.4L748.2 385.7" /><path d="M799.4 382.4L803.4 385.7L807.4 382.4L811.4 385.7L815.4 382.4L819.4 385.7L823.4 382.4L827.4 385.7L831.4 382.4L835.4 385.7L839.4 382.4L843.4 385.7L847.4 382.4L851.4 385.7L855.4 382.4L859.4 385.7L863.4 382.4L867.4 385.7" /><path d="M1376.5 382.4L1380.5 385.7L1384.5 382.4L1388.5 385.7L1392.5 382.4L1396.5 385.7L1400.5 382.4L1404.5 385.7L1408.5 382.4L1412.5 385.7L1416.5 382.4L1420.5 385.7L1424.5 382.4L1428.5 385.7L1432.5 382.4L1436.5 385.7L1440.5 382.4L1444.5 385.7L1448.5 382.4L1452.5 385.7L1456.5 382.4L1460.5 385.7L1464.5 382.4L1468.5 385.7L1472.5 382.4L1476.5 385.7L1480.5 382.4L1484.5 385.7L1488.5 382.4" /></g><g clip-path="url(#cl6)" fill="none" stroke="#ff4a4a" stroke-width="1.2"><path d="M396.0 406.4L400.0 409.7L404.0 406.4L408.0 409.7L412.0 406.4L416.0 409.7L420.0 406.4L424.0 409.7L428.0 406.4L432.0 409.7L436.0 406.4L440.0 409.7L444.0 406.4L448.0 409.7L452.0 406.4L456.0 409.7L460.0 406.4L464.0 409.7L468.0 406.4L472.0 409.7L476.0 406.4L480.0 409.7L484.0 406.4L488.0 409.7L492.0 406.4L496.0 409.7L500.0 406.4L504.0 409.7L508.0 406.4" /><path d="M594.8 406.4L598.8 409.7L602.8 406.4L606.8 409.7L610.8 406.4L614.8 409.7L618.8 406.4L622.8 409.7L626.8 406.4L630.8 409.7L634.8 406.4" /><path d="M756.0 406.4L760.0 409.7L764.0 406.4L768.0 409.7L772.0 406.4L776.0 409.7L780.0 406.4L784.0 409.7L788.0 406.4L792.0 409.7L796.0 406.4L800.0 409.7L804.0 406.4L808.0 409.7L812.0 406.4" /><path d="M819.3 406.4L823.3 409.7L827.3 406.4L831.3 409.7L835.3 406.4L839.3 409.7L843.3 406.4L847.3 409.7L851.3 406.4" /><path d="M858.3 406.4L862.3 409.7L866.3 406.4L870.3 409.7L874.3 406.4L878.3 409.7L882.3 406.4L886.3 409.7L890.3 406.4L894.3 409.7L898.3 406.4L902.3 409.7L906.3 406.4L910.3 409.7L914.3 406.4L918.3 409.7L922.3 406.4L926.3 409.7L930.3 406.4L934.3 409.7" /><path d="M1376.5 406.4L1380.5 409.7L1384.5 406.4L1388.5 409.7L1392.5 406.4L1396.5 409.7L1400.5 406.4L1404.5 409.7L1408.5 406.4L1412.5 409.7L1416.5 406.4L1420.5 409.7L1424.5 406.4L1428.5 409.7L1432.5 406.4L1436.5 409.7L1440.5 406.4L1444.5 409.7L1448.5 406.4L1452.5 409.7L1456.5 406.4L1460.5 409.7L1464.5 406.4L1468.5 409.7L1472.5 406.4L1476.5 409.7L1480.5 406.4L1484.5 409.7L1488.5 406.4" /></g><g clip-path="url(#cl7)" fill="none" stroke="#ff4a4a" stroke-width="1.2"><path d="M259.8 430.4L263.8 433.7L267.8 430.4L271.8 433.7L275.8 430.4L279.8 433.7L283.8 430.4L287.8 433.7L291.8 430.4L295.8 433.7L299.8 430.4L303.8 433.7L307.8 430.4L311.8 433.7L315.8 430.4L319.8 433.7L323.8 430.4L327.8 433.7L331.8 430.4L335.8 433.7L339.8 430.4L343.8 433.7L347.8 430.4L351.8 433.7" /><path d="M594.8 430.4L598.8 433.7L602.8 430.4L606.8 433.7L610.8 430.4L614.8 433.7L618.8 430.4L622.8 433.7L626.8 430.4L630.8 433.7L634.8 430.4" /><path d="M688.2 430.4L692.2 433.7L696.2 430.4L700.2 433.7L704.2 430.4L708.2 433.7L712.2 430.4L716.2 433.7L720.2 430.4L724.2 433.7L728.2 430.4L732.2 433.7L736.2 430.4L740.2 433.7L744.2 430.4L748.2 433.7L752.2 430.4L756.2 433.7L760.2 430.4L764.2 433.7L768.2 430.4L772.2 433.7L776.2 430.4L780.2 433.7L784.2 430.4L788.2 433.7L792.2 430.4" /><path d="M800.5 430.4L804.5 433.7L808.5 430.4L812.5 433.7L816.5 430.4L820.5 433.7L824.5 430.4L828.5 433.7L832.5 430.4L836.5 433.7L840.5 430.4L844.5 433.7L848.5 430.4L852.5 433.7L856.5 430.4L860.5 433.7L864.5 430.4L868.5 433.7L872.5 430.4L876.5 433.7L880.5 430.4" /><path d="M887.2 430.4L891.2 433.7L895.2 430.4L899.2 433.7L903.2 430.4L907.2 433.7L911.2 430.4L915.2 433.7L919.2 430.4" /><path d="M926.2 430.4L930.2 433.7L934.2 430.4L938.2 433.7L942.2 430.4L946.2 433.7L950.2 430.4L954.2 433.7L958.2 430.4L962.2 433.7L966.2 430.4L970.2 433.7L974.2 430.4L978.2 433.7L982.2 430.4L986.2 433.7L990.2 430.4L994.2 433.7L998.2 430.4L1002.2 433.7L1006.2 430.4L1010.2 433.7L1014.2 430.4L1018.2 433.7L1022.2 430.4L1026.2 433.7L1030.2 430.4L1034.2 433.7L1038.2 430.4L1042.2 433.7" /><path d="M1048.4 430.4L1052.4 433.7L1056.4 430.4L1060.4 433.7L1064.4 430.4L1068.4 433.7L1072.4 430.4L1076.4 433.7L1080.4 430.4L1084.4 433.7L1088.4 430.4L1092.4 433.7L1096.4 430.4L1100.4 433.7L1104.4 430.4L1108.4 433.7L1112.4 430.4L1116.4 433.7L1120.4 430.4L1124.4 433.7L1128.4 430.4" /><path d="M1376.5 430.4L1380.5 433.7L1384.5 430.4L1388.5 433.7L1392.5 430.4L1396.5 433.7L1400.5 430.4L1404.5 433.7L1408.5 430.4L1412.5 433.7L1416.5 430.4L1420.5 433.7L1424.5 430.4L1428.5 433.7L1432.5 430.4L1436.5 433.7L1440.5 430.4L1444.5 433.7L1448.5 430.4L1452.5 433.7L1456.5 430.4L1460.5 433.7L1464.5 430.4L1468.5 433.7L1472.5 430.4L1476.5 433.7L1480.5 430.4L1484.5 433.7L1488.5 430.4" /></g><g clip-path="url(#cl8)" fill="none" stroke="#ff4a4a" stroke-width="1.2"><path d="M182.0 454.4L186.0 457.7L190.0 454.4L194.0 457.7L198.0 454.4L202.0 457.7L206.0 454.4L210.0 457.7L214.0 454.4L218.0 457.7L222.0 454.4L226.0 457.7L230.0 454.4L234.0 457.7L238.0 454.4L242.0 457.7L246.0 454.4L250.0 457.7L254.0 454.4" /><path d="M261.0 454.4L265.0 457.7L269.0 454.4L273.0 457.7L277.0 454.4L281.0 457.7L285.0 454.4L289.0 457.7L293.0 454.4L297.0 457.7L301.0 454.4L305.0 457.7L309.0 454.4L313.0 457.7L317.0 454.4L321.0 457.7L325.0 454.4L329.0 457.7L333.0 454.4" /><path d="M396.0 454.4L400.0 457.7L404.0 454.4L408.0 457.7L412.0 454.4L416.0 457.7L420.0 454.4L424.0 457.7L428.0 454.4L432.0 457.7L436.0 454.4L440.0 457.7L444.0 454.4L448.0 457.7L452.0 454.4L456.0 457.7L460.0 454.4L464.0 457.7L468.0 454.4L472.0 457.7L476.0 454.4L480.0 457.7L484.0 454.4L488.0 457.7L492.0 454.4L496.0 457.7L500.0 454.4L504.0 457.7L508.0 454.4L512.0 457.7" /><path d="M594.8 454.4L598.8 457.7L602.8 454.4L606.8 457.7L610.8 454.4L614.8 457.7L618.8 454.4L622.8 457.7L626.8 454.4L630.8 457.7L634.8 454.4" /><path d="M723.8 454.4L727.8 457.7L731.8 454.4L735.8 457.7L739.8 454.4L743.8 457.7" /><path d="M751.6 454.4L755.6 457.7L759.6 454.4L763.6 457.7L767.6 454.4L771.6 457.7L775.6 454.4L779.6 457.7L783.6 454.4L787.6 457.7L791.6 454.4L795.6 457.7L799.6 454.4L803.6 457.7" /><path d="M812.7 454.4L816.7 457.7L820.7 454.4L824.7 457.7L828.7 454.4L832.7 457.7L836.7 454.4L840.7 457.7L844.7 454.4" /><path d="M851.7 454.4L855.7 457.7L859.7 454.4L863.7 457.7L867.7 454.4L871.7 457.7L875.7 454.4L879.7 457.7L883.7 454.4L887.7 457.7L891.7 454.4L895.7 457.7L899.7 454.4L903.7 457.7L907.7 454.4L911.7 457.7L915.7 454.4L919.7 457.7L923.7 454.4L927.7 457.7L931.7 454.4" /><path d="M1376.5 454.4L1380.5 457.7L1384.5 454.4L1388.5 457.7L1392.5 454.4L1396.5 457.7L1400.5 454.4L1404.5 457.7L1408.5 454.4L1412.5 457.7L1416.5 454.4L1420.5 457.7L1424.5 454.4L1428.5 457.7L1432.5 454.4L1436.5 457.7L1440.5 454.4L1444.5 457.7L1448.5 454.4L1452.5 457.7L1456.5 454.4L1460.5 457.7L1464.5 454.4L1468.5 457.7L1472.5 454.4L1476.5 457.7L1480.5 454.4L1484.5 457.7L1488.5 454.4" /></g><g clip-path="url(#cl9)" fill="none" stroke="#ff4a4a" stroke-width="1.2"><path d="M396.0 478.4L400.0 481.7L404.0 478.4L408.0 481.7L412.0 478.4L416.0 481.7L420.0 478.4L424.0 481.7L428.0 478.4L432.0 481.7L436.0 478.4L440.0 481.7L444.0 478.4L448.0 481.7L452.0 478.4L456.0 481.7L460.0 478.4L464.0 481.7L468.0 478.4L472.0 481.7L476.0 478.4L480.0 481.7L484.0 478.4L488.0 481.7L492.0 478.4L496.0 481.7L500.0 478.4L504.0 481.7L508.0 478.4" /><path d="M739.4 478.4L743.4 481.7L747.4 478.4L751.4 481.7L755.4 478.4L759.4 481.7L763.4 478.4L767.4 481.7L771.4 478.4L775.4 481.7L779.4 478.4L783.4 481.7L787.4 478.4L791.4 481.7L795.4 478.4L799.4 481.7L803.4 478.4L807.4 481.7L811.4 478.4L815.4 481.7L819.4 478.4L823.4 481.7L827.4 478.4L831.4 481.7L835.4 478.4L839.4 481.7L843.4 478.4L847.4 481.7L851.4 478.4" /><path d="M1376.5 478.4L1380.5 481.7L1384.5 478.4L1388.5 481.7L1392.5 478.4L1396.5 481.7L1400.5 478.4L1404.5 481.7L1408.5 478.4L1412.5 481.7L1416.5 478.4L1420.5 481.7L1424.5 478.4L1428.5 481.7L1432.5 478.4L1436.5 481.7L1440.5 478.4L1444.5 481.7L1448.5 478.4L1452.5 481.7L1456.5 478.4L1460.5 481.7L1464.5 478.4L1468.5 481.7L1472.5 478.4L1476.5 481.7L1480.5 478.4L1484.5 481.7L1488.5 478.4" /></g><g clip-path="url(#cl10)" fill="none" stroke="#ff4a4a" stroke-width="1.2"><path d="M396.0 502.4L400.0 505.7L404.0 502.4L408.0 505.7L412.0 502.4L416.0 505.7L420.0 502.4L424.0 505.7L428.0 502.4L432.0 505.7L436.0 502.4L440.0 505.7L444.0 502.4L448.0 505.7L452.0 502.4L456.0 505.7L460.0 502.4L464.0 505.7L468.0 502.4L472.0 505.7L476.0 502.4L480.0 505.7L484.0 502.4L488.0 505.7L492.0 502.4L496.0 505.7L500.0 502.4L504.0 505.7L508.0 502.4" /><path d="M739.4 502.4L743.4 505.7L747.4 502.4L751.4 505.7L755.4 502.4L759.4 505.7L763.4 502.4L767.4 505.7L771.4 502.4L775.4 505.7L779.4 502.4L783.4 505.7L787.4 502.4L791.4 505.7L795.4 502.4L799.4 505.7L803.4 502.4L807.4 505.7L811.4 502.4L815.4 505.7L819.4 502.4L823.4 505.7L827.4 502.4L831.4 505.7L835.4 502.4L839.4 505.7L843.4 502.4L847.4 505.7L851.4 502.4" /><path d="M1376.5 502.4L1380.5 505.7L1384.5 502.4L1388.5 505.7L1392.5 502.4L1396.5 505.7L1400.5 502.4L1404.5 505.7L1408.5 502.4L1412.5 505.7L1416.5 502.4L1420.5 505.7L1424.5 502.4L1428.5 505.7L1432.5 502.4L1436.5 505.7L1440.5 502.4L1444.5 505.7L1448.5 502.4L1452.5 505.7L1456.5 502.4L1460.5 505.7L1464.5 502.4L1468.5 505.7L1472.5 502.4L1476.5 505.7L1480.5 502.4L1484.5 505.7L1488.5 502.4" /></g><g clip-path="url(#cl11)" fill="none" stroke="#ff4a4a" stroke-width="1.2"><path d="M236.5 526.4L240.5 529.7L244.5 526.4L248.5 529.7L252.5 526.4L256.5 529.7L260.5 526.4L264.5 529.7L268.5 526.4L272.5 529.7L276.5 526.4L280.5 529.7L284.5 526.4L288.5 529.7L292.5 526.4L296.5 529.7L300.5 526.4L304.5 529.7L308.5 526.4L312.5 529.7L316.5 526.4L320.5 529.7L324.5 526.4L328.5 529.7L332.5 526.4L336.5 529.7L340.5 526.4L344.5 529.7L348.5 526.4L352.5 529.7L356.5 526.4L360.5 529.7" /><path d="M721.6 526.4L725.6 529.7L729.6 526.4L733.6 529.7L737.6 526.4L741.6 529.7L745.6 526.4L749.6 529.7L753.6 526.4" /><path d="M760.5 526.4L764.5 529.7L768.5 526.4L772.5 529.7L776.5 526.4L780.5 529.7L784.5 526.4L788.5 529.7L792.5 526.4L796.5 529.7L800.5 526.4L804.5 529.7L808.5 526.4L812.5 529.7L816.5 526.4L820.5 529.7L824.5 526.4L828.5 529.7L832.5 526.4L836.5 529.7L840.5 526.4L844.5 529.7L848.5 526.4L852.5 529.7L856.5 526.4L860.5 529.7" /><path d="M1376.5 526.4L1380.5 529.7L1384.5 526.4L1388.5 529.7L1392.5 526.4L1396.5 529.7L1400.5 526.4L1404.5 529.7L1408.5 526.4L1412.5 529.7L1416.5 526.4L1420.5 529.7L1424.5 526.4L1428.5 529.7L1432.5 526.4L1436.5 529.7L1440.5 526.4L1444.5 529.7L1448.5 526.4L1452.5 529.7L1456.5 526.4L1460.5 529.7L1464.5 526.4L1468.5 529.7L1472.5 526.4L1476.5 529.7L1480.5 526.4L1484.5 529.7L1488.5 526.4" /></g><g clip-path="url(#cl12)" fill="none" stroke="#ff4a4a" stroke-width="1.2"><path d="M236.5 550.4L240.5 553.7L244.5 550.4L248.5 553.7L252.5 550.4L256.5 553.7L260.5 550.4L264.5 553.7L268.5 550.4L272.5 553.7L276.5 550.4L280.5 553.7L284.5 550.4L288.5 553.7L292.5 550.4L296.5 553.7L300.5 550.4L304.5 553.7L308.5 550.4L312.5 553.7L316.5 550.4L320.5 553.7L324.5 550.4L328.5 553.7L332.5 550.4L336.5 553.7L340.5 550.4L344.5 553.7L348.5 550.4L352.5 553.7L356.5 550.4L360.5 553.7" /><path d="M721.6 550.4L725.6 553.7L729.6 550.4L733.6 553.7L737.6 550.4L741.6 553.7L745.6 550.4L749.6 553.7L753.6 550.4" /><path d="M760.5 550.4L764.5 553.7L768.5 550.4L772.5 553.7L776.5 550.4L780.5 553.7L784.5 550.4L788.5 553.7L792.5 550.4L796.5 553.7L800.5 550.4L804.5 553.7L808.5 550.4L812.5 553.7L816.5 550.4L820.5 553.7L824.5 550.4L828.5 553.7L832.5 550.4L836.5 553.7L840.5 550.4L844.5 553.7L848.5 550.4L852.5 553.7L856.5 550.4L860.5 553.7" /><path d="M1376.5 550.4L1380.5 553.7L1384.5 550.4L1388.5 553.7L1392.5 550.4L1396.5 553.7L1400.5 550.4L1404.5 553.7L1408.5 550.4L1412.5 553.7L1416.5 550.4L1420.5 553.7L1424.5 550.4L1428.5 553.7L1432.5 550.4L1436.5 553.7L1440.5 550.4L1444.5 553.7L1448.5 550.4L1452.5 553.7L1456.5 550.4L1460.5 553.7L1464.5 550.4L1468.5 553.7L1472.5 550.4L1476.5 553.7L1480.5 550.4L1484.5 553.7L1488.5 550.4" /></g><g clip-path="url(#cl13)" fill="none" stroke="#ff4a4a" stroke-width="1.2"><path d="M236.5 574.4L240.5 577.7L244.5 574.4L248.5 577.7L252.5 574.4L256.5 577.7L260.5 574.4L264.5 577.7L268.5 574.4L272.5 577.7L276.5 574.4L280.5 577.7L284.5 574.4L288.5 577.7L292.5 574.4L296.5 577.7L300.5 574.4L304.5 577.7L308.5 574.4L312.5 577.7L316.5 574.4L320.5 577.7L324.5 574.4L328.5 577.7L332.5 574.4L336.5 577.7L340.5 574.4L344.5 577.7L348.5 574.4L352.5 577.7L356.5 574.4L360.5 577.7" /><path d="M396.0 574.4L400.0 577.7L404.0 574.4L408.0 577.7L412.0 574.4L416.0 577.7L420.0 574.4L424.0 577.7L428.0 574.4L432.0 577.7L436.0 574.4L440.0 577.7L444.0 574.4L448.0 577.7L452.0 574.4L456.0 577.7" /><path d="M594.8 574.4L598.8 577.7L602.8 574.4L606.8 577.7L610.8 574.4L614.8 577.7L618.8 574.4L622.8 577.7L626.8 574.4L630.8 577.7L634.8 574.4" /><path d="M688.2 574.4L692.2 577.7L696.2 574.4L700.2 577.7L704.2 574.4L708.2 577.7L712.2 574.4L716.2 577.7L720.2 574.4L724.2 577.7L728.2 574.4L732.2 577.7" /><path d="M738.2 574.4L742.2 577.7L746.2 574.4L750.2 577.7L754.2 574.4L758.2 577.7L762.2 574.4L766.2 577.7L770.2 574.4L774.2 577.7" /><path d="M782.7 574.4L786.7 577.7L790.7 574.4L794.7 577.7L798.7 574.4L802.7 577.7L806.7 574.4L810.7 577.7L814.7 574.4L818.7 577.7L822.7 574.4L826.7 577.7L830.7 574.4L834.7 577.7L838.7 574.4L842.7 577.7L846.7 574.4L850.7 577.7L854.7 574.4L858.7 577.7L862.7 574.4L866.7 577.7L870.7 574.4L874.7 577.7L878.7 574.4L882.7 577.7L886.7 574.4L890.7 577.7" /><path d="M899.4 574.4L903.4 577.7L907.4 574.4L911.4 577.7L915.4 574.4L919.4 577.7L923.4 574.4L927.4 577.7L931.4 574.4L935.4 577.7L939.4 574.4L943.4 577.7L947.4 574.4L951.4 577.7L955.4 574.4L959.4 577.7L963.4 574.4L967.4 577.7L971.4 574.4" /><path d="M1376.5 574.4L1380.5 577.7L1384.5 574.4L1388.5 577.7L1392.5 574.4L1396.5 577.7L1400.5 574.4L1404.5 577.7L1408.5 574.4L1412.5 577.7L1416.5 574.4L1420.5 577.7L1424.5 574.4L1428.5 577.7L1432.5 574.4L1436.5 577.7L1440.5 574.4L1444.5 577.7L1448.5 574.4L1452.5 577.7L1456.5 574.4L1460.5 577.7L1464.5 574.4L1468.5 577.7L1472.5 574.4L1476.5 577.7L1480.5 574.4L1484.5 577.7L1488.5 574.4" /></g><g clip-path="url(#cl14)" fill="none" stroke="#ff4a4a" stroke-width="1.2"><path d="M182.0 598.4L186.0 601.7L190.0 598.4L194.0 601.7L198.0 598.4L202.0 601.7L206.0 598.4L210.0 601.7L214.0 598.4L218.0 601.7L222.0 598.4L226.0 601.7" /><path d="M232.0 598.4L236.0 601.7L240.0 598.4L244.0 601.7L248.0 598.4L252.0 601.7L256.0 598.4L260.0 601.7L264.0 598.4" /><path d="M273.1 598.4L277.1 601.7L281.1 598.4L285.1 601.7L289.1 598.4L293.1 601.7L297.1 598.4L301.1 601.7L305.1 598.4L309.1 601.7L313.1 598.4L317.1 601.7L321.1 598.4L325.1 601.7L329.1 598.4L333.1 601.7L337.1 598.4L341.1 601.7L345.1 598.4L349.1 601.7L353.1 598.4" /><path d="M1376.5 598.4L1380.5 601.7L1384.5 598.4L1388.5 601.7L1392.5 598.4L1396.5 601.7L1400.5 598.4L1404.5 601.7L1408.5 598.4L1412.5 601.7L1416.5 598.4L1420.5 601.7L1424.5 598.4L1428.5 601.7L1432.5 598.4L1436.5 601.7L1440.5 598.4L1444.5 601.7L1448.5 598.4L1452.5 601.7L1456.5 598.4L1460.5 601.7L1464.5 598.4L1468.5 601.7L1472.5 598.4L1476.5 601.7L1480.5 598.4L1484.5 601.7L1488.5 598.4" /></g><g clip-path="url(#cl15)" fill="none" stroke="#ff4a4a" stroke-width="1.2"><path d="M182.0 622.4L186.0 625.7L190.0 622.4L194.0 625.7L198.0 622.4L202.0 625.7L206.0 622.4L210.0 625.7L214.0 622.4L218.0 625.7L222.0 622.4L226.0 625.7" /><path d="M232.0 622.4L236.0 625.7L240.0 622.4L244.0 625.7L248.0 622.4L252.0 625.7L256.0 622.4L260.0 625.7L264.0 622.4" /><path d="M273.1 622.4L277.1 625.7L281.1 622.4L285.1 625.7L289.1 622.4L293.1 625.7L297.1 622.4L301.1 625.7L305.1 622.4L309.1 625.7L313.1 622.4L317.1 625.7L321.1 622.4L325.1 625.7L329.1 622.4L333.1 625.7L337.1 622.4L341.1 625.7L345.1 622.4L349.1 625.7L353.1 622.4" /><path d="M1376.5 622.4L1380.5 625.7L1384.5 622.4L1388.5 625.7L1392.5 622.4L1396.5 625.7L1400.5 622.4L1404.5 625.7L1408.5 622.4L1412.5 625.7L1416.5 622.4L1420.5 625.7L1424.5 622.4L1428.5 625.7L1432.5 622.4L1436.5 625.7L1440.5 622.4L1444.5 625.7L1448.5 622.4L1452.5 625.7L1456.5 622.4L1460.5 625.7L1464.5 622.4L1468.5 625.7L1472.5 622.4L1476.5 625.7L1480.5 622.4L1484.5 625.7L1488.5 622.4" /></g><g clip-path="url(#cl16)" fill="none" stroke="#ff4a4a" stroke-width="1.2"><path d="M182.0 646.4L186.0 649.7L190.0 646.4L194.0 649.7L198.0 646.4L202.0 649.7L206.0 646.4L210.0 649.7L214.0 646.4L218.0 649.7L222.0 646.4L226.0 649.7L230.0 646.4L234.0 649.7L238.0 646.4L242.0 649.7L246.0 646.4L250.0 649.7L254.0 646.4" /><path d="M261.0 646.4L265.0 649.7L269.0 646.4L273.0 649.7L277.0 646.4L281.0 649.7L285.0 646.4L289.0 649.7L293.0 646.4L297.0 649.7L301.0 646.4L305.0 649.7L309.0 646.4L313.0 649.7L317.0 646.4L321.0 649.7L325.0 646.4L329.0 649.7L333.0 646.4" /><path d="M682.7 646.4L686.7 649.7L690.7 646.4L694.7 649.7L698.7 646.4L702.7 649.7L706.7 646.4L710.7 649.7L714.7 646.4L718.7 649.7L722.7 646.4L726.7 649.7L730.7 646.4L734.7 649.7L738.7 646.4L742.7 649.7L746.7 646.4L750.7 649.7L754.7 646.4L758.7 649.7L762.7 646.4L766.7 649.7" /><path d="M772.7 646.4L776.7 649.7L780.7 646.4L784.7 649.7L788.7 646.4L792.7 649.7L796.7 646.4L800.7 649.7L804.7 646.4L808.7 649.7L812.7 646.4L816.7 649.7L820.7 646.4L824.7 649.7L828.7 646.4L832.7 649.7L836.7 646.4" /><path d="M846.1 646.4L850.1 649.7L854.1 646.4L858.1 649.7L862.1 646.4L866.1 649.7L870.1 646.4L874.1 649.7L878.1 646.4L882.1 649.7L886.1 646.4L890.1 649.7L894.1 646.4L898.1 649.7L902.1 646.4" /><path d="M910.6 646.4L914.6 649.7L918.6 646.4L922.6 649.7L926.6 646.4L930.6 649.7L934.6 646.4L938.6 649.7L942.6 646.4L946.6 649.7L950.6 646.4L954.6 649.7L958.6 646.4L962.6 649.7L966.6 646.4L970.6 649.7L974.6 646.4L978.6 649.7L982.6 646.4L986.6 649.7L990.6 646.4" /><path d="M996.2 646.4L1000.2 649.7L1004.2 646.4L1008.2 649.7L1012.2 646.4L1016.2 649.7L1020.2 646.4L1024.2 649.7L1028.2 646.4" /><path d="M1035.1 646.4L1039.1 649.7L1043.1 646.4L1047.1 649.7L1051.1 646.4L1055.1 649.7L1059.1 646.4L1063.1 649.7L1067.1 646.4L1071.1 649.7L1075.1 646.4L1079.1 649.7L1083.1 646.4L1087.1 649.7L1091.1 646.4L1095.1 649.7L1099.1 646.4L1103.1 649.7L1107.1 646.4L1111.1 649.7L1115.1 646.4L1119.1 649.7L1123.1 646.4L1127.1 649.7L1131.1 646.4" /><path d="M1376.5 646.4L1380.5 649.7L1384.5 646.4L1388.5 649.7L1392.5 646.4L1396.5 649.7L1400.5 646.4L1404.5 649.7L1408.5 646.4L1412.5 649.7L1416.5 646.4L1420.5 649.7L1424.5 646.4L1428.5 649.7L1432.5 646.4L1436.5 649.7L1440.5 646.4L1444.5 649.7L1448.5 646.4L1452.5 649.7L1456.5 646.4L1460.5 649.7L1464.5 646.4L1468.5 649.7L1472.5 646.4L1476.5 649.7L1480.5 646.4L1484.5 649.7L1488.5 646.4" /></g><g clip-path="url(#cl17)" fill="none" stroke="#ff4a4a" stroke-width="1.2"><path d="M236.5 670.4L240.5 673.7L244.5 670.4L248.5 673.7L252.5 670.4L256.5 673.7L260.5 670.4L264.5 673.7L268.5 670.4L272.5 673.7L276.5 670.4L280.5 673.7L284.5 670.4L288.5 673.7L292.5 670.4L296.5 673.7L300.5 670.4L304.5 673.7L308.5 670.4L312.5 673.7L316.5 670.4L320.5 673.7L324.5 670.4L328.5 673.7L332.5 670.4L336.5 673.7L340.5 670.4L344.5 673.7L348.5 670.4L352.5 673.7L356.5 670.4L360.5 673.7" /><path d="M396.0 670.4L400.0 673.7L404.0 670.4L408.0 673.7L412.0 670.4L416.0 673.7L420.0 670.4L424.0 673.7L428.0 670.4L432.0 673.7L436.0 670.4L440.0 673.7L444.0 670.4L448.0 673.7L452.0 670.4L456.0 673.7L460.0 670.4L464.0 673.7L468.0 670.4L472.0 673.7L476.0 670.4L480.0 673.7L484.0 670.4L488.0 673.7L492.0 670.4L496.0 673.7L500.0 670.4L504.0 673.7L508.0 670.4" /><path d="M649.3 670.4L653.3 673.7L657.3 670.4L661.3 673.7L665.3 670.4L669.3 673.7L673.3 670.4L677.3 673.7L681.3 670.4L685.3 673.7L689.3 670.4L693.3 673.7L697.3 670.4L701.3 673.7" /><path d="M708.2 670.4L712.2 673.7L716.2 670.4L720.2 673.7L724.2 670.4L728.2 673.7L732.2 670.4L736.2 673.7L740.2 670.4L744.2 673.7L748.2 670.4L752.2 673.7L756.2 670.4L760.2 673.7L764.2 670.4L768.2 673.7" /><path d="M817.2 670.4L821.2 673.7L825.2 670.4L829.2 673.7L833.2 670.4L837.2 673.7L841.2 670.4L845.2 673.7L849.2 670.4" /><path d="M858.3 670.4L862.3 673.7L866.3 670.4L870.3 673.7L874.3 670.4L878.3 673.7L882.3 670.4L886.3 673.7L890.3 670.4L894.3 673.7L898.3 670.4L902.3 673.7L906.3 670.4L910.3 673.7L914.3 670.4L918.3 673.7L922.3 670.4L926.3 673.7L930.3 670.4L934.3 673.7L938.3 670.4L942.3 673.7L946.3 670.4L950.3 673.7L954.3 670.4L958.3 673.7L962.3 670.4L966.3 673.7L970.3 670.4" /><path d="M1376.5 670.4L1380.5 673.7L1384.5 670.4L1388.5 673.7L1392.5 670.4L1396.5 673.7L1400.5 670.4L1404.5 673.7L1408.5 670.4L1412.5 673.7L1416.5 670.4L1420.5 673.7L1424.5 670.4L1428.5 673.7L1432.5 670.4L1436.5 673.7L1440.5 670.4L1444.5 673.7L1448.5 670.4L1452.5 673.7L1456.5 670.4L1460.5 673.7L1464.5 670.4L1468.5 673.7L1472.5 670.4L1476.5 673.7L1480.5 670.4L1484.5 673.7L1488.5 670.4" /></g><g clip-path="url(#cl18)" fill="none" stroke="#ff4a4a" stroke-width="1.2"><path d="M649.3 694.4L653.3 697.7L657.3 694.4L661.3 697.7L665.3 694.4L669.3 697.7L673.3 694.4L677.3 697.7L681.3 694.4L685.3 697.7L689.3 694.4L693.3 697.7L697.3 694.4L701.3 697.7L705.3 694.4L709.3 697.7L713.3 694.4L717.3 697.7L721.3 694.4L725.3 697.7L729.3 694.4" /><path d="M736.0 694.4L740.0 697.7L744.0 694.4L748.0 697.7L752.0 694.4L756.0 697.7L760.0 694.4L764.0 697.7L768.0 694.4L772.0 697.7L776.0 694.4L780.0 697.7" /><path d="M787.2 694.4L791.2 697.7L795.2 694.4L799.2 697.7L803.2 694.4L807.2 697.7L811.2 694.4L815.2 697.7L819.2 694.4L823.2 697.7L827.2 694.4L831.2 697.7L835.2 694.4L839.2 697.7L843.2 694.4L847.2 697.7L851.2 694.4L855.2 697.7L859.2 694.4L863.2 697.7L867.2 694.4L871.2 697.7L875.2 694.4L879.2 697.7L883.2 694.4L887.2 697.7" /><path d="M896.1 694.4L900.1 697.7L904.1 694.4L908.1 697.7L912.1 694.4L916.1 697.7L920.1 694.4L924.1 697.7L928.1 694.4L932.1 697.7L936.1 694.4L940.1 697.7L944.1 694.4L948.1 697.7L952.1 694.4L956.1 697.7L960.1 694.4L964.1 697.7" /><path d="M1376.5 694.4L1380.5 697.7L1384.5 694.4L1388.5 697.7L1392.5 694.4L1396.5 697.7L1400.5 694.4L1404.5 697.7L1408.5 694.4L1412.5 697.7L1416.5 694.4L1420.5 697.7L1424.5 694.4L1428.5 697.7L1432.5 694.4L1436.5 697.7L1440.5 694.4L1444.5 697.7L1448.5 694.4L1452.5 697.7L1456.5 694.4L1460.5 697.7L1464.5 694.4L1468.5 697.7L1472.5 694.4L1476.5 697.7L1480.5 694.4L1484.5 697.7L1488.5 694.4" /></g><g clip-path="url(#cl19)" fill="none" stroke="#ff4a4a" stroke-width="1.2"><path d="M236.5 718.4L240.5 721.7L244.5 718.4L248.5 721.7L252.5 718.4L256.5 721.7L260.5 718.4L264.5 721.7L268.5 718.4L272.5 721.7L276.5 718.4L280.5 721.7L284.5 718.4L288.5 721.7L292.5 718.4L296.5 721.7L300.5 718.4L304.5 721.7L308.5 718.4L312.5 721.7L316.5 718.4L320.5 721.7L324.5 718.4L328.5 721.7L332.5 718.4L336.5 721.7L340.5 718.4L344.5 721.7L348.5 718.4L352.5 721.7L356.5 718.4L360.5 721.7" /><path d="M682.7 718.4L686.7 721.7L690.7 718.4L694.7 721.7L698.7 718.4L702.7 721.7L706.7 718.4L710.7 721.7L714.7 718.4L718.7 721.7L722.7 718.4L726.7 721.7L730.7 718.4L734.7 721.7L738.7 718.4L742.7 721.7L746.7 718.4L750.7 721.7L754.7 718.4L758.7 721.7L762.7 718.4L766.7 721.7" /><path d="M772.7 718.4L776.7 721.7L780.7 718.4L784.7 721.7L788.7 718.4L792.7 721.7L796.7 718.4L800.7 721.7L804.7 718.4L808.7 721.7L812.7 718.4L816.7 721.7L820.7 718.4L824.7 721.7L828.7 718.4L832.7 721.7L836.7 718.4" /><path d="M846.1 718.4L850.1 721.7L854.1 718.4L858.1 721.7L862.1 718.4L866.1 721.7L870.1 718.4L874.1 721.7L878.1 718.4L882.1 721.7L886.1 718.4L890.1 721.7L894.1 718.4L898.1 721.7L902.1 718.4" /><path d="M910.6 718.4L914.6 721.7L918.6 718.4L922.6 721.7L926.6 718.4L930.6 721.7L934.6 718.4L938.6 721.7L942.6 718.4L946.6 721.7L950.6 718.4L954.6 721.7L958.6 718.4L962.6 721.7L966.6 718.4L970.6 721.7L974.6 718.4L978.6 721.7L982.6 718.4L986.6 721.7L990.6 718.4" /><path d="M996.2 718.4L1000.2 721.7L1004.2 718.4L1008.2 721.7L1012.2 718.4L1016.2 721.7L1020.2 718.4L1024.2 721.7L1028.2 718.4" /><path d="M1035.1 718.4L1039.1 721.7L1043.1 718.4L1047.1 721.7L1051.1 718.4L1055.1 721.7L1059.1 718.4L1063.1 721.7L1067.1 718.4L1071.1 721.7L1075.1 718.4L1079.1 721.7L1083.1 718.4L1087.1 721.7L1091.1 718.4L1095.1 721.7L1099.1 718.4L1103.1 721.7L1107.1 718.4L1111.1 721.7L1115.1 718.4L1119.1 721.7L1123.1 718.4L1127.1 721.7L1131.1 718.4" /><path d="M1376.5 718.4L1380.5 721.7L1384.5 718.4L1388.5 721.7L1392.5 718.4L1396.5 721.7L1400.5 718.4L1404.5 721.7L1408.5 718.4L1412.5 721.7L1416.5 718.4L1420.5 721.7L1424.5 718.4L1428.5 721.7L1432.5 718.4L1436.5 721.7L1440.5 718.4L1444.5 721.7L1448.5 718.4L1452.5 721.7L1456.5 718.4L1460.5 721.7L1464.5 718.4L1468.5 721.7L1472.5 718.4L1476.5 721.7L1480.5 718.4L1484.5 721.7L1488.5 718.4" /><path d="M1593.0 718.4L1597.0 721.7L1601.0 718.4L1605.0 721.7L1609.0 718.4L1613.0 721.7L1617.0 718.4L1621.0 721.7L1625.0 718.4L1629.0 721.7L1633.0 718.4L1637.0 721.7L1641.0 718.4L1645.0 721.7" /><path d="M1653.4 718.4L1657.4 721.7L1661.4 718.4L1665.4 721.7L1669.4 718.4L1673.4 721.7L1677.4 718.4L1681.4 721.7L1685.4 718.4L1689.4 721.7L1693.4 718.4L1697.4 721.7L1701.4 718.4L1705.4 721.7L1709.4 718.4L1713.4 721.7L1717.4 718.4L1721.4 721.7L1725.4 718.4L1729.4 721.7L1733.4 718.4L1737.4 721.7" /></g><path d="M1289.6 295.6V304.6L1294.4 300.2Z" fill="#f00" stroke="#000" stroke-width="1" stroke-linejoin="miter"/></svg>
<svg class="a" style="left:0;top:0" width="40" height="40" viewBox="0 0 40 40"><path d="M11.6 8.5H22.5L28.5 14.5V31.4H11.6Z" fill="#fff" stroke="#22a31a" stroke-width="1.1" stroke-linejoin="round"/><path d="M24.6 7.9H29.1V12.4Z" fill="#22a31a"/><rect x="14" y="19" width="11.9" height="8.8" fill="#22a31a"/><rect x="15" y="20.0" width="5.2" height="1.1" fill="#fff"/><rect x="21" y="20.0" width="4" height="1.1" fill="#fff"/><rect x="15" y="22.1" width="5.2" height="1.1" fill="#fff"/><rect x="21" y="22.1" width="4" height="1.1" fill="#fff"/><rect x="15" y="24.2" width="5.2" height="1.1" fill="#fff"/><rect x="21" y="24.2" width="4" height="1.1" fill="#fff"/><rect x="15" y="26.3" width="5.2" height="1.1" fill="#fff"/><rect x="21" y="26.3" width="4" height="1.1" fill="#fff"/></svg>
</body></html>
